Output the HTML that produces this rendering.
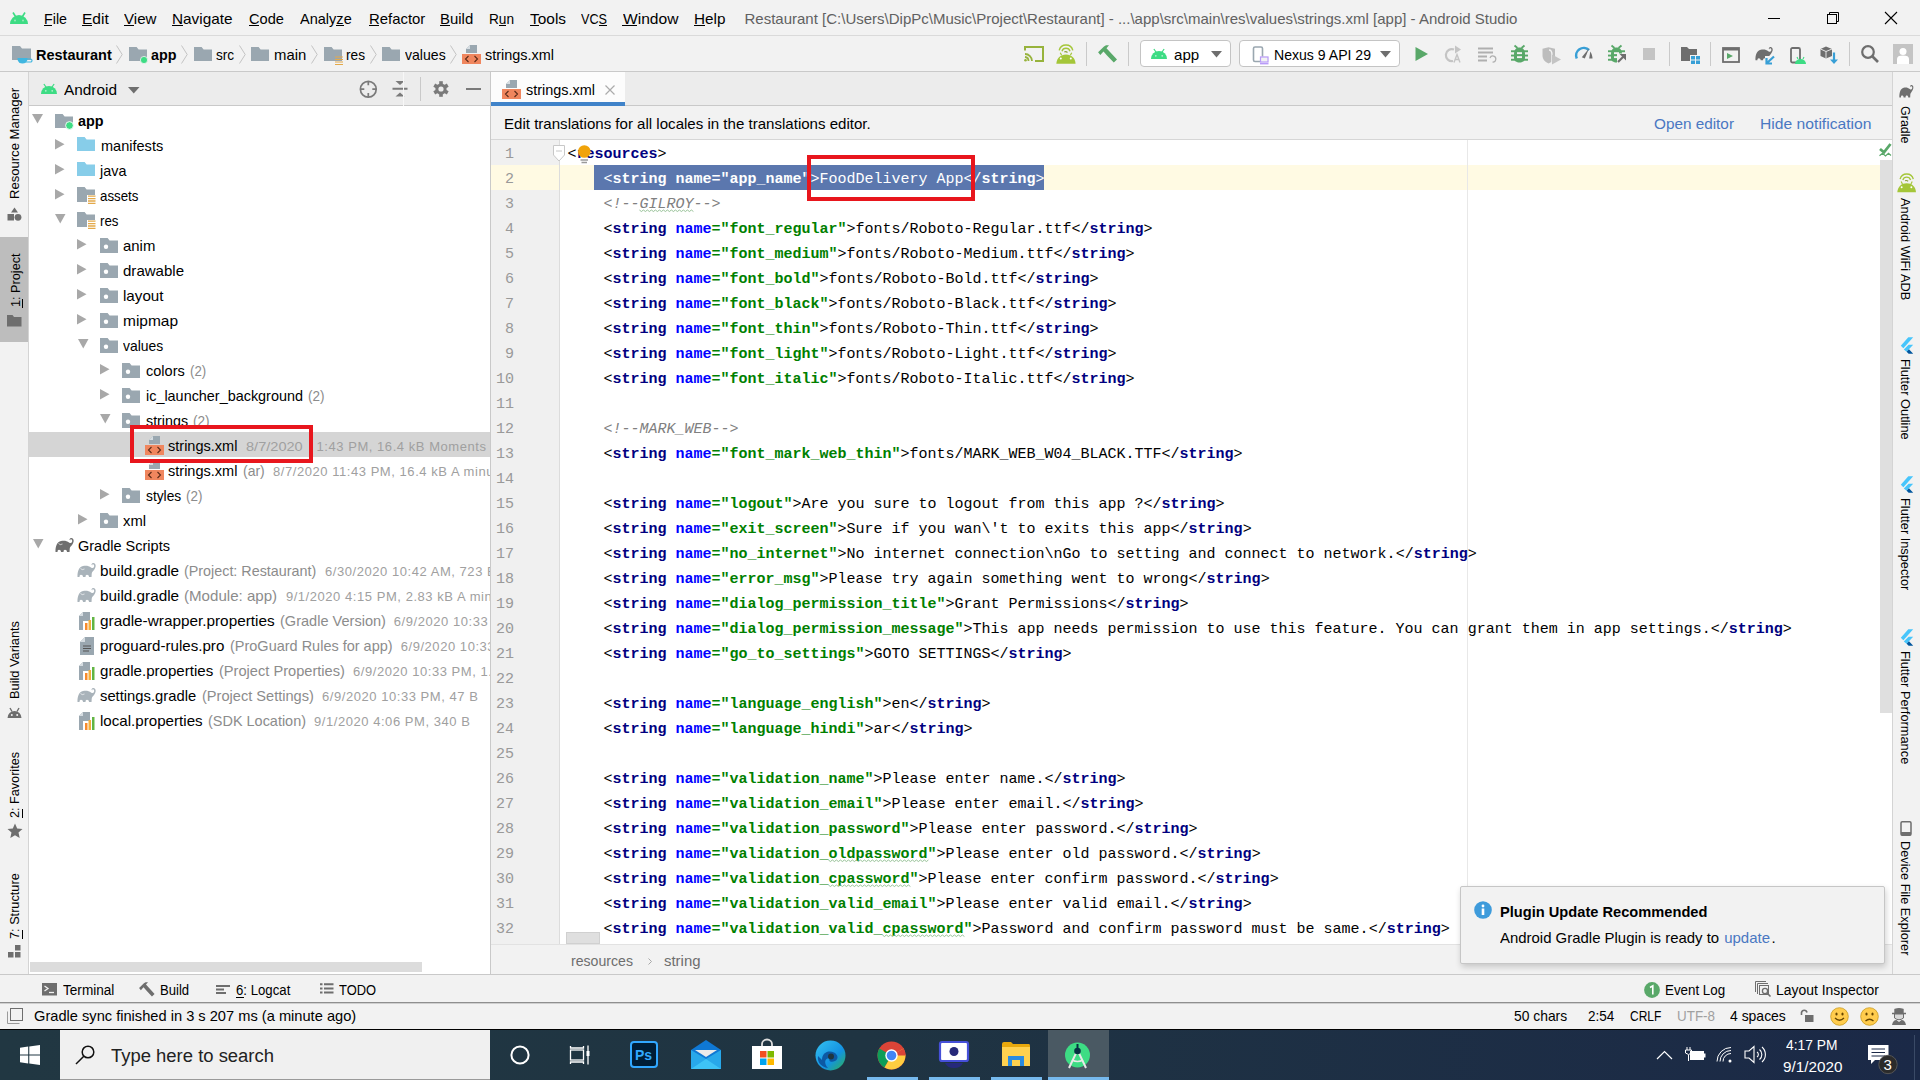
<!DOCTYPE html>
<html><head><meta charset="utf-8"><title>Android Studio</title><style>
html,body{margin:0;padding:0;width:1920px;height:1080px;overflow:hidden;background:#f2f2f2;}
body{position:relative;font-family:'Liberation Sans',sans-serif;}
.t{position:absolute;white-space:pre;line-height:0;transform-origin:0 0;font-family:'Liberation Sans',sans-serif;}
.r{position:absolute;}
.s{position:absolute;overflow:visible;}
</style></head><body>
<div class="r" style="left:0px;top:0px;width:1920px;height:35px;background:#f2f2f2;"></div>
<div class="r" style="left:0px;top:35px;width:1920px;height:1px;background:#dadada;"></div>
<div class="r" style="left:0px;top:36px;width:1920px;height:35px;background:#f2f2f2;"></div>
<div class="r" style="left:0px;top:71px;width:1920px;height:1px;background:#c9c9c9;"></div>
<div class="r" style="left:0px;top:72px;width:28px;height:902px;background:#f2f2f2;"></div>
<div class="r" style="left:28px;top:72px;width:1px;height:902px;background:#d4d4d4;"></div>
<div class="r" style="left:29px;top:72px;width:461px;height:33px;background:#ececec;"></div>
<div class="r" style="left:29px;top:105px;width:461px;height:1px;background:#c9c9c9;"></div>
<div class="r" style="left:29px;top:106px;width:461px;height:868px;background:#ffffff;"></div>
<div class="r" style="left:490px;top:72px;width:1px;height:902px;background:#c9c9c9;"></div>
<div class="r" style="left:491px;top:72px;width:1401px;height:33px;background:#ececec;"></div>
<div class="r" style="left:491px;top:105px;width:1401px;height:1px;background:#c9c9c9;"></div>
<div class="r" style="left:491px;top:106px;width:1401px;height:33px;background:#f2f2f2;"></div>
<div class="r" style="left:491px;top:139px;width:1401px;height:1px;background:#d6d6d6;"></div>
<div class="r" style="left:491px;top:140px;width:1401px;height:805px;background:#ffffff;"></div>
<div class="r" style="left:491px;top:140px;width:68px;height:805px;background:#f0f0f0;"></div>
<div class="r" style="left:559px;top:140px;width:1px;height:805px;background:#dcdcdc;"></div>
<div class="r" style="left:491px;top:945px;width:1401px;height:29px;background:#f2f2f2;"></div>
<div class="r" style="left:491px;top:944px;width:1401px;height:1px;background:#e2e2e2;"></div>
<div class="r" style="left:1892px;top:72px;width:1px;height:902px;background:#d4d4d4;"></div>
<div class="r" style="left:1893px;top:72px;width:27px;height:902px;background:#f2f2f2;"></div>
<div class="r" style="left:0px;top:974px;width:1920px;height:1px;background:#c9c9c9;"></div>
<div class="r" style="left:0px;top:975px;width:1920px;height:27px;background:#f2f2f2;"></div>
<div class="r" style="left:0px;top:1002px;width:1920px;height:1px;background:#8f8f8f;"></div>
<div class="r" style="left:0px;top:1003px;width:1920px;height:1px;background:#cfcfcf;"></div>
<div class="r" style="left:0px;top:1004px;width:1920px;height:25px;background:#f2f2f2;"></div>
<div class="r" style="left:0px;top:1029px;width:1920px;height:1px;background:#000000;"></div>
<div class="r" style="left:0px;top:1030px;width:1920px;height:50px;background:linear-gradient(90deg,#213742 0%,#1f3442 45%,#1b2947 100%);"></div>
<svg class="s" style="left:8px;top:10px;" width="22" height="16" viewBox="0 0 22 16"><path d="M2 14 A9 9 0 0 1 20 14 Z" fill="#3ddc84"/><line x1="5" y1="2.5" x2="7.5" y2="6.5" stroke="#3ddc84" stroke-width="1.6"/><line x1="17" y1="2.5" x2="14.5" y2="6.5" stroke="#3ddc84" stroke-width="1.6"/><circle cx="7" cy="10.5" r="1" fill="#f2f2f2" opacity=".5"/><circle cx="15" cy="10.5" r="1" fill="#f2f2f2" opacity=".5"/></svg>
<div class="t" style="left:43.75px;top:19.00px;font-size:15px;color:#000;transform:scaleX(0.9504);">File</div>
<div class="r" style="left:44px;top:25px;width:8px;height:1px;background:#000;"></div>
<div class="t" style="left:82.00px;top:19.00px;font-size:15px;color:#000;transform:scaleX(1.0368);">Edit</div>
<div class="r" style="left:82px;top:25px;width:10px;height:1px;background:#000;"></div>
<div class="t" style="left:123.75px;top:19.00px;font-size:15px;color:#000;transform:scaleX(1.0062);">View</div>
<div class="r" style="left:124px;top:25px;width:10px;height:1px;background:#000;"></div>
<div class="t" style="left:172.00px;top:19.00px;font-size:15px;color:#000;transform:scaleX(1.0220);">Navigate</div>
<div class="r" style="left:172px;top:25px;width:11px;height:1px;background:#000;"></div>
<div class="t" style="left:248.75px;top:19.00px;font-size:15px;color:#000;transform:scaleX(0.9749);">Code</div>
<div class="r" style="left:249px;top:25px;width:10px;height:1px;background:#000;"></div>
<div class="t" style="left:300.00px;top:19.00px;font-size:15px;color:#000;transform:scaleX(0.9691);">Analyze</div>
<div class="r" style="left:336px;top:25px;width:8px;height:1px;background:#000;"></div>
<div class="t" style="left:368.75px;top:19.00px;font-size:15px;color:#000;transform:scaleX(0.9921);">Refactor</div>
<div class="r" style="left:369px;top:25px;width:10px;height:1px;background:#000;"></div>
<div class="t" style="left:440.00px;top:19.00px;font-size:15px;color:#000;transform:scaleX(0.9955);">Build</div>
<div class="r" style="left:440px;top:25px;width:10px;height:1px;background:#000;"></div>
<div class="t" style="left:489.00px;top:19.00px;font-size:15px;color:#000;transform:scaleX(0.9091);">Run</div>
<div class="r" style="left:499px;top:25px;width:7px;height:1px;background:#000;"></div>
<div class="t" style="left:530.00px;top:19.00px;font-size:15px;color:#000;transform:scaleX(1.0286);">Tools</div>
<div class="r" style="left:530px;top:25px;width:9px;height:1px;background:#000;"></div>
<div class="t" style="left:581.00px;top:19.00px;font-size:15px;color:#000;transform:scaleX(0.8442);">VCS</div>
<div class="r" style="left:599px;top:25px;width:8px;height:1px;background:#000;"></div>
<div class="t" style="left:622.50px;top:19.00px;font-size:15px;color:#000;transform:scaleX(1.0393);">Window</div>
<div class="r" style="left:622px;top:25px;width:15px;height:1px;background:#000;"></div>
<div class="t" style="left:694.00px;top:19.00px;font-size:15px;color:#000;transform:scaleX(1.0194);">Help</div>
<div class="r" style="left:694px;top:25px;width:11px;height:1px;background:#000;"></div>
<div class="t" style="left:744.50px;top:19.00px;font-size:15px;color:#616161;">Restaurant [C:\Users\DipPc\Music\Project\Restaurant] - ...\app\src\main\res\values\strings.xml [app] - Android Studio</div>
<div class="r" style="left:1768px;top:18px;width:12px;height:1px;background:#000;"></div>
<svg class="s" style="left:1826px;top:11px;" width="14" height="14" viewBox="0 0 14 14"><rect x="1.5" y="3.5" width="9" height="9" fill="none" stroke="#000" stroke-width="1"/><path d="M3.5 3.5 V1.5 H12.5 V10.5 H10.5" fill="none" stroke="#000" stroke-width="1"/></svg>
<svg class="s" style="left:1884px;top:11px;" width="14" height="14" viewBox="0 0 14 14"><path d="M1 1 L13 13 M13 1 L1 13" stroke="#000" stroke-width="1.1"/></svg>
<svg class="s" style="left:12px;top:46px;" width="19" height="14" viewBox="0 0 19 14"><path d="M0 0 H8.0 L10.0 2.5 H19 V14 H0 Z" fill="#9aa7b0"/></svg>
<svg class="s" style="left:17px;top:55px;" width="15" height="9" viewBox="0 0 15 9"><path d="M0.5 0 H10.5 V1 A5 4.5 0 0 1 0.5 1 Z" fill="#40b6e0" transform="translate(0,3)"/><path d="M10 4 H13.5 A1.5 1.5 0 0 1 13.5 7 H9" stroke="#40b6e0" stroke-width="1.2" fill="none"/></svg>
<div class="t" style="left:35.70px;top:55.00px;font-size:15px;color:#000;font-weight:700;transform:scaleX(0.9668);">Restaurant</div>
<svg class="s" style="left:116px;top:45px;" width="7" height="19" viewBox="0 0 7 19"><path d="M0.5 0.5 L6.2 9.5 L0.5 18.5" stroke="#c4c4c4" stroke-width="1" fill="none"/></svg>
<svg class="s" style="left:129px;top:47px;" width="18" height="14" viewBox="0 0 18 14"><path d="M0 0 H7.6 L9.6 2.5 H18 V14 H0 Z" fill="#9aa7b0"/></svg>
<svg class="s" style="left:140px;top:56px;" width="8" height="8" viewBox="0 0 8 8"><circle cx="4" cy="4" r="3.6" fill="#3ddc84" stroke="#f2f2f2" stroke-width="0.8"/></svg>
<div class="t" style="left:150.90px;top:55.00px;font-size:15px;color:#000;font-weight:700;transform:scaleX(0.9551);">app</div>
<svg class="s" style="left:181px;top:45px;" width="7" height="19" viewBox="0 0 7 19"><path d="M0.5 0.5 L6.2 9.5 L0.5 18.5" stroke="#c4c4c4" stroke-width="1" fill="none"/></svg>
<svg class="s" style="left:194px;top:47px;" width="18" height="14" viewBox="0 0 18 14"><path d="M0 0 H7.6 L9.6 2.5 H18 V14 H0 Z" fill="#9aa7b0"/></svg>
<div class="t" style="left:215.80px;top:55.00px;font-size:15px;color:#000;transform:scaleX(0.9100);">src</div>
<svg class="s" style="left:239px;top:45px;" width="7" height="19" viewBox="0 0 7 19"><path d="M0.5 0.5 L6.2 9.5 L0.5 18.5" stroke="#c4c4c4" stroke-width="1" fill="none"/></svg>
<svg class="s" style="left:251px;top:47px;" width="18" height="14" viewBox="0 0 18 14"><path d="M0 0 H7.6 L9.6 2.5 H18 V14 H0 Z" fill="#9aa7b0"/></svg>
<div class="t" style="left:273.75px;top:55.00px;font-size:15px;color:#000;transform:scaleX(0.9923);">main</div>
<svg class="s" style="left:311px;top:45px;" width="7" height="19" viewBox="0 0 7 19"><path d="M0.5 0.5 L6.2 9.5 L0.5 18.5" stroke="#c4c4c4" stroke-width="1" fill="none"/></svg>
<svg class="s" style="left:324px;top:47px;" width="18" height="14" viewBox="0 0 18 14"><path d="M0 0 H7.6 L9.6 2.5 H18 V14 H0 Z" fill="#9aa7b0"/></svg>
<svg class="s" style="left:335px;top:56px;" width="9" height="9" viewBox="0 0 9 9"><path d="M0 1 H8 M0 3.5 H8 M0 6 H8 M0 8.5 H8" stroke="#e3a94a" stroke-width="1.2"/></svg>
<div class="t" style="left:346.00px;top:55.00px;font-size:15px;color:#000;transform:scaleX(0.9135);">res</div>
<svg class="s" style="left:370px;top:45px;" width="7" height="19" viewBox="0 0 7 19"><path d="M0.5 0.5 L6.2 9.5 L0.5 18.5" stroke="#c4c4c4" stroke-width="1" fill="none"/></svg>
<svg class="s" style="left:382px;top:47px;" width="18" height="14" viewBox="0 0 18 14"><path d="M0 0 H7.6 L9.6 2.5 H18 V14 H0 Z" fill="#9aa7b0"/></svg>
<div class="t" style="left:405.00px;top:55.00px;font-size:15px;color:#000;transform:scaleX(0.9389);">values</div>
<svg class="s" style="left:450px;top:45px;" width="7" height="19" viewBox="0 0 7 19"><path d="M0.5 0.5 L6.2 9.5 L0.5 18.5" stroke="#c4c4c4" stroke-width="1" fill="none"/></svg>
<svg class="s" style="left:462px;top:45px;" width="19" height="19" viewBox="0 0 19 19"><path d="M8 0 H15 V8 H4 V4 Z" fill="#9aa7b0"/><path d="M4 4 L8 0 V4 Z" fill="#d6dde2"/><rect x="0" y="9" width="19" height="10" fill="#f0865e"/><path d="M6.5 11 L3.5 14 L6.5 17 M12.5 11 L15.5 14 L12.5 17" stroke="#5a2a17" stroke-width="1.1" fill="none"/></svg>
<div class="t" style="left:485.00px;top:55.00px;font-size:15px;color:#000;transform:scaleX(0.9623);">strings.xml</div>
<svg class="s" style="left:1024px;top:46px;" width="20" height="16" viewBox="0 0 20 16"><path d="M1 4.5 V1 H19 V15 H11" stroke="#97b33c" stroke-width="2" fill="none"/><path d="M1 8 A7 7 0 0 1 8 15 M1 11 A4 4 0 0 1 4.5 15" stroke="#97b33c" stroke-width="1.8" fill="none"/><circle cx="1.5" cy="14.2" r="1.3" fill="#97b33c"/></svg>
<svg class="s" style="left:1056px;top:45px;" width="20" height="19" viewBox="0 0 20 19"><path d="M0.3 18.7 C0.8 13 4.5 9.5 10 9.5 C15.5 9.5 19.2 13 19.6 18.7 Z" fill="#a4c639"/><path d="M4.3 7.8 L5.6 10.3 M15.7 7.8 L14.4 10.3" stroke="#a4c639" stroke-width="1.2"/><circle cx="4.8" cy="13.6" r="1" fill="#fff"/><circle cx="14.8" cy="13.6" r="1" fill="#fff"/><path d="M3.2 5.3 A7 7 0 0 1 16.8 5.3" stroke="#a4c639" stroke-width="1.4" fill="none"/><path d="M6 6.2 A4.17 4.17 0 0 1 14 6.2" stroke="#a4c639" stroke-width="1.4" fill="none"/><path d="M8.3 7 Q10 6.2 11.5 7.5" stroke="#8a9e3a" stroke-width="1.2" fill="none"/></svg>
<div class="r" style="left:1086px;top:42px;width:1px;height:24px;background:#cacaca;"></div>
<svg class="s" style="left:1098px;top:45px;" width="20" height="18" viewBox="0 0 20 18"><path d="M0.1 7.2 L6 1.5 L8 0.3 H11 L8.5 3.2 L19 14.6 L15.8 17.6 L9 10.5 L5.5 6.5 L2.3 10 Z" fill="#59a869"/></svg>
<div class="r" style="left:1128px;top:42px;width:1px;height:24px;background:#cacaca;"></div>
<div class="r" style="left:1140px;top:40px;width:91px;height:27px;background:#ffffff;border:1px solid #c4c4c4;border-radius:4px;box-sizing:border-box;"></div>
<svg class="s" style="left:1151px;top:49px;" width="16" height="10" viewBox="0 0 16 10"><path d="M0 10 A8.0 8.0 0 0 1 16 10 Z" fill="#3ddc84"/><line x1="2.88" y1="0" x2="5.28" y2="3.5" stroke="#3ddc84" stroke-width="1.3"/><line x1="13.12" y1="0" x2="10.72" y2="3.5" stroke="#3ddc84" stroke-width="1.3"/><circle cx="4.8" cy="6.800000000000001" r="0.88" fill="#ffffff" opacity=".6"/><circle cx="11.2" cy="6.800000000000001" r="0.88" fill="#ffffff" opacity=".6"/></svg>
<div class="t" style="left:1174.30px;top:55.00px;font-size:15px;color:#000;transform:scaleX(1.0080);">app</div>
<svg class="s" style="left:1211px;top:51px;" width="11" height="7" viewBox="0 0 11 7"><path d="M0 0 H11 L5.5 6.5 Z" fill="#6e6e6e"/></svg>
<div class="r" style="left:1239px;top:40px;width:161px;height:27px;background:#ffffff;border:1px solid #c4c4c4;border-radius:4px;box-sizing:border-box;"></div>
<svg class="s" style="left:1252px;top:46px;" width="17" height="19" viewBox="0 0 17 19"><rect x="1.5" y="1" width="9" height="14.5" rx="1.5" fill="none" stroke="#9aa7b0" stroke-width="1.6"/><rect x="8" y="10.5" width="8.5" height="6" fill="#f2f2f2"/><rect x="8.5" y="11" width="7.5" height="5" fill="none" stroke="#b99bf8" stroke-width="1.2"/><rect x="8" y="17" width="8.5" height="1.4" fill="#b99bf8"/></svg>
<div class="t" style="left:1273.70px;top:55.00px;font-size:15px;color:#000;transform:scaleX(0.9381);">Nexus 9 API 29</div>
<svg class="s" style="left:1380px;top:51px;" width="11" height="7" viewBox="0 0 11 7"><path d="M0 0 H11 L5.5 6.5 Z" fill="#6e6e6e"/></svg>
<svg class="s" style="left:1415px;top:47px;" width="13" height="14" viewBox="0 0 13 14"><path d="M0.5 0 L13 7 L0.5 14 Z" fill="#59a869"/></svg>
<svg class="s" style="left:1445px;top:45px;" width="17" height="18" viewBox="0 0 17 18"><path d="M9 4.5 A6 6 0 1 0 8 16" stroke="#c4c4c4" stroke-width="2.2" fill="none"/><path d="M10 0.5 L16 4.5 L10 8.5 Z" fill="#c4c4c4"/><path d="M9 17.5 L12 9.5 L15 17.5 M10.2 14.5 H13.8" stroke="#c4c4c4" stroke-width="1.4" fill="none"/></svg>
<svg class="s" style="left:1478px;top:47px;" width="18" height="16" viewBox="0 0 18 16"><path d="M0 1.5 H15 M0 5.5 H15 M0 9.5 H9 M0 13.5 H9" stroke="#afafaf" stroke-width="2"/><path d="M12 11 A3 3 0 1 1 14.5 15" stroke="#afafaf" stroke-width="1.2" fill="none"/></svg>
<svg class="s" style="left:1511px;top:45.3px;" width="17" height="18" viewBox="0 0 17 18"><path d="M3.5 0.5 L6.5 3 M13.5 0.5 L10.5 3" stroke="#59a869" stroke-width="1.8"/><rect x="0" y="5.3" width="17" height="1.9" fill="#59a869"/><rect x="0" y="9.6" width="17" height="1.9" fill="#59a869"/><rect x="0" y="13.8" width="17" height="1.9" fill="#59a869"/><path d="M3 9 C3 4.5 5.5 2.5 8.5 2.5 C11.5 2.5 14 4.5 14 9 V13 C14 16 11.5 17.5 8.5 17.5 C5.5 17.5 3 16 3 13 Z" fill="#59a869"/><rect x="6" y="7.2" width="5" height="1.9" fill="#f2f2f2"/><rect x="6" y="11.2" width="5" height="1.9" fill="#f2f2f2"/></svg>
<svg class="s" style="left:1542px;top:46.5px;" width="19" height="18" viewBox="0 0 19 18"><path d="M0.5 1.8 L6.5 0.3 L13 1.8 V9 Q13 13.5 6.5 16.5 Q0.5 13.5 0.5 9 Z" fill="#bdbdbd"/><path d="M7 3 Q10 3 10 8 V15" stroke="#f2f2f2" stroke-width="1.4" fill="none"/><path d="M10 7.5 L19 12.5 L10 17.5 Z" fill="#c4c4c4"/></svg>
<svg class="s" style="left:1575px;top:47px;" width="18" height="12" viewBox="0 0 18 12"><path d="M1.8 11.5 A7.5 7.5 0 0 1 14 3.2" stroke="#389fd6" stroke-width="2.6" fill="none"/><path d="M14.3 1 L9.8 11.5 L6.8 10.2 Z" fill="#6e6e6e"/><path d="M15.3 4.5 C16.5 6.5 17.5 9 17.5 11.5 H14.2 Z" fill="#6e6e6e"/></svg>
<svg class="s" style="left:1608px;top:45.3px;" width="17" height="18" viewBox="0 0 17 18"><path d="M3.5 0.5 L6.5 3 M13.5 0.5 L10.5 3" stroke="#59a869" stroke-width="1.8"/><rect x="0" y="5.3" width="17" height="1.9" fill="#59a869"/><rect x="0" y="9.6" width="17" height="1.9" fill="#59a869"/><rect x="0" y="13.8" width="17" height="1.9" fill="#59a869"/><path d="M3 9 C3 4.5 5.5 2.5 8.5 2.5 C11.5 2.5 14 4.5 14 9 V13 C14 16 11.5 17.5 8.5 17.5 C5.5 17.5 3 16 3 13 Z" fill="#59a869"/><rect x="6" y="7.2" width="5" height="1.9" fill="#f2f2f2"/><rect x="6" y="11.2" width="5" height="1.9" fill="#f2f2f2"/><rect x="9" y="8.5" width="10" height="10" fill="#f2f2f2"/><path d="M10 17 L16.5 10.5" stroke="#6e6e6e" stroke-width="2.2"/><path d="M11.5 9 H18 V15.5 Z" fill="#6e6e6e"/></svg>
<div class="r" style="left:1643px;top:48px;width:12px;height:12px;background:#c4c4c4;"></div>
<div class="r" style="left:1669px;top:42px;width:1px;height:24px;background:#cacaca;"></div>
<svg class="s" style="left:1681px;top:47px;" width="20" height="17" viewBox="0 0 20 17"><path d="M0 0 H6 L8 2 H16 V8 H9 V14 H0 Z" fill="#6e6e6e"/><rect x="10" y="9" width="4" height="3.5" fill="#389fd6"/><rect x="15" y="9" width="4" height="3.5" fill="#389fd6"/><rect x="10" y="13.5" width="4" height="3.5" fill="#389fd6"/><rect x="15" y="13.5" width="4" height="3.5" fill="#389fd6"/></svg>
<div class="r" style="left:1710px;top:42px;width:1px;height:24px;background:#cacaca;"></div>
<svg class="s" style="left:1722px;top:46.5px;" width="18" height="16" viewBox="0 0 18 16"><rect x="1" y="1" width="16" height="14" fill="none" stroke="#6e6e6e" stroke-width="1.8"/><rect x="1" y="1" width="16" height="2.5" fill="#6e6e6e"/><path d="M5 6 L11 9 L5 12 Z" fill="#59a869"/></svg>
<svg class="s" style="left:1754.5px;top:46.5px;" width="20" height="18" viewBox="0 0 20 18"><g transform="scale(0.95,0.95)"><path d="M0.5 14 C0.3 8 2 4 6 3 C9 2.2 12 2.8 14 4.5 C15.5 5.5 16.5 5 17 4 C17.6 2.8 17 1.3 16 1.3 C15.3 1.3 15 2 15.3 2.5 L14.5 1.8 C14.5 0.5 15.5 0 16.5 0 C18.5 0.2 19 2.5 18.5 4 C17.8 6.5 16 8 15 9.5 C14.5 10.5 14.8 12.5 14.5 14 H12 C12 12.5 11 11.8 10 11.8 C9 11.8 8.5 12.5 8.5 14 H6 C6 12.5 5 11.8 4 11.8 C3 11.8 2.5 12.5 2.5 14 Z" fill="#6e6e6e"/></g><rect x="10" y="9" width="10" height="9" fill="#f2f2f2"/><path d="M19 9.5 L12.5 15.5 M11.5 11 V16.5 H17" stroke="#389fd6" stroke-width="2.2" fill="none"/></svg>
<svg class="s" style="left:1790px;top:46.5px;" width="16" height="17" viewBox="0 0 16 17"><rect x="1" y="1" width="9" height="14.5" rx="1.5" fill="none" stroke="#6e6e6e" stroke-width="1.8"/><path d="M5 17 A5.5 5 0 0 1 16 17 Z" fill="#3ddc84"/><path d="M7 10 L8 12 M14 10 L13 12" stroke="#3ddc84" stroke-width="1.1"/></svg>
<svg class="s" style="left:1820px;top:45.5px;" width="20" height="19" viewBox="0 0 20 19"><path d="M6 0.5 L12 3 L12 10 L6 12.5 L0.5 10 V3 Z" fill="#6e6e6e"/><path d="M0.5 3 L6 5.5 L12 3 M6 5.5 V12.5" stroke="#f2f2f2" stroke-width="0.9" fill="none"/><path d="M14 6.5 V16" stroke="#389fd6" stroke-width="2.2"/><path d="M10 13.5 L14 18 L18 13.5 Z" fill="#389fd6"/></svg>
<div class="r" style="left:1849px;top:42px;width:1px;height:24px;background:#cacaca;"></div>
<svg class="s" style="left:1861px;top:45px;" width="18" height="18" viewBox="0 0 18 18"><circle cx="7" cy="7" r="5.8" fill="none" stroke="#6e6e6e" stroke-width="2.2"/><path d="M11 11 L17 17" stroke="#6e6e6e" stroke-width="2.6"/></svg>
<svg class="s" style="left:1893px;top:44px;" width="20" height="20" viewBox="0 0 20 20"><rect width="20" height="20" fill="#c4c4c4"/><circle cx="10" cy="7.5" r="3.5" fill="#fff"/><path d="M4 20 V15 C4 12.5 6 11.5 10 11.5 C14 11.5 16 12.5 16 15 V20 Z" fill="#fff"/></svg>
<div class="t" style="left:14.99px;top:199.40px;font-size:13px;color:#000;transform:rotate(-90deg) scaleX(1.0045);">Resource Manager</div>
<svg class="s" style="left:7px;top:206.5px;" width="15" height="14" viewBox="0 0 15 14"><path d="M7.5 0.5 L11 5.5 H4 Z" fill="#6e6e6e"/><rect x="0.5" y="7" width="6.5" height="6.5" fill="#6e6e6e"/><circle cx="11" cy="10.3" r="3.4" fill="#6e6e6e"/></svg>
<div class="r" style="left:0px;top:237px;width:28px;height:105px;background:#bdbdbd;"></div>
<div class="t" style="left:15.99px;top:307.30px;font-size:13px;color:#000;transform:rotate(-90deg) scaleX(0.9763);">1: Project</div>
<div class="r" style="left:22px;top:299px;width:1px;height:8.5px;background:#000;"></div>
<svg class="s" style="left:7px;top:315px;" width="15" height="12" viewBox="0 0 15 12"><path d="M0 0 H5.5 L7 2 H14.5 V11.5 H0 Z" fill="#6e6e6e"/></svg>
<div class="t" style="left:14.99px;top:698.50px;font-size:13px;color:#000;transform:rotate(-90deg) scaleX(0.9836);">Build Variants</div>
<svg class="s" style="left:7px;top:705.5px;" width="15" height="12" viewBox="0 0 15 12"><path d="M0.5 12 A7 7 0 0 1 14.5 12 Z" fill="#6e6e6e"/><path d="M3 2 L5 5.5 M12 2 L10 5.5" stroke="#6e6e6e" stroke-width="1.4"/><circle cx="4.8" cy="9" r="1" fill="#f2f2f2"/><circle cx="10.2" cy="9" r="1" fill="#f2f2f2"/></svg>
<div class="t" style="left:14.99px;top:818.00px;font-size:13px;color:#000;transform:rotate(-90deg) scaleX(0.9720);">2: Favorites</div>
<div class="r" style="left:22px;top:809px;width:1px;height:9px;background:#000;"></div>
<svg class="s" style="left:6.5px;top:822.5px;" width="16" height="16" viewBox="0 0 16 16"><path d="M8 0.5 L10.2 5.6 L15.5 6.1 L11.5 9.6 L12.7 15 L8 12.2 L3.3 15 L4.5 9.6 L0.5 6.1 L5.8 5.6 Z" fill="#6e6e6e"/></svg>
<div class="t" style="left:14.99px;top:938.70px;font-size:13px;color:#000;transform:rotate(-90deg) scaleX(0.9777);">7: Structure</div>
<div class="r" style="left:22px;top:930px;width:1px;height:9px;background:#000;"></div>
<svg class="s" style="left:8px;top:945px;" width="14" height="13" viewBox="0 0 14 13"><rect x="7" y="0" width="5.5" height="5.5" fill="#6e6e6e"/><rect x="0" y="7" width="5.5" height="5.5" fill="#6e6e6e"/><rect x="7" y="7" width="5.5" height="5.5" fill="#6e6e6e"/></svg>
<div style="position:absolute;left:0;top:0;width:490px;height:974px;overflow:hidden"><svg class="s" style="left:41px;top:84px;" width="16" height="10" viewBox="0 0 16 10"><path d="M0 10 A8.0 8.0 0 0 1 16 10 Z" fill="#3ddc84"/><line x1="2.88" y1="0" x2="5.28" y2="3.5" stroke="#3ddc84" stroke-width="1.3"/><line x1="13.12" y1="0" x2="10.72" y2="3.5" stroke="#3ddc84" stroke-width="1.3"/><circle cx="4.8" cy="6.800000000000001" r="0.88" fill="#ffffff" opacity=".6"/><circle cx="11.2" cy="6.800000000000001" r="0.88" fill="#ffffff" opacity=".6"/></svg>
<div class="t" style="left:64.25px;top:90.00px;font-size:15px;color:#000;transform:scaleX(1.0242);">Android</div>
<svg class="s" style="left:128px;top:87px;" width="12" height="7" viewBox="0 0 12 7"><path d="M0 0 H11.5 L5.75 6.5 Z" fill="#6e6e6e"/></svg>
<svg class="s" style="left:359px;top:80px;" width="19" height="19" viewBox="0 0 19 19"><circle cx="9.3" cy="9.2" r="7.9" fill="none" stroke="#7a7a7a" stroke-width="1.7"/><path d="M9.3 1 V5.3 M9.3 13 V17.4 M1 9.2 H5.3 M13.3 9.2 H17.6" stroke="#7a7a7a" stroke-width="1.7"/></svg>
<svg class="s" style="left:392px;top:81px;" width="16" height="16" viewBox="0 0 16 16"><path d="M3.5 0 H12.5 L8 4 Z M0.5 6.8 H15.5 V8.8 H0.5 Z M3.5 15.5 H12.5 L8 11.5 Z" fill="#7a7a7a"/></svg>
<div class="r" style="left:420px;top:77px;width:1px;height:24px;background:#c9c9c9;"></div>
<div class="r" style="left:403px;top:72px;width:1px;height:34px;background:#f7f7f7;"></div>
<svg class="s" style="left:433px;top:81px;" width="16" height="16" viewBox="0 0 16 16"><g transform="translate(8,8)"><circle r="5.6" fill="#7a7a7a"/><rect x="-1.8" y="-7.8" width="3.6" height="4" fill="#7a7a7a" transform="rotate(0)"/><rect x="-1.8" y="-7.8" width="3.6" height="4" fill="#7a7a7a" transform="rotate(60)"/><rect x="-1.8" y="-7.8" width="3.6" height="4" fill="#7a7a7a" transform="rotate(120)"/><rect x="-1.8" y="-7.8" width="3.6" height="4" fill="#7a7a7a" transform="rotate(180)"/><rect x="-1.8" y="-7.8" width="3.6" height="4" fill="#7a7a7a" transform="rotate(240)"/><rect x="-1.8" y="-7.8" width="3.6" height="4" fill="#7a7a7a" transform="rotate(300)"/><circle r="2.6" fill="#ececec"/></g></svg>
<div class="r" style="left:466px;top:88px;width:15px;height:2px;background:#7a7a7a;"></div>
<svg class="s" style="left:32px;top:114px;" width="11" height="9.5" viewBox="0 0 11 9.5"><path d="M0 0 H11 L5.5 9.5 Z" fill="#a8a8a8"/></svg>
<svg class="s" style="left:55px;top:114px;" width="18" height="14" viewBox="0 0 18 14"><path d="M0 0 H7.6 L9.6 2.5 H18 V14 H0 Z" fill="#9aa7b0"/></svg>
<svg class="s" style="left:65px;top:121px;" width="9" height="9" viewBox="0 0 9 9"><circle cx="4.5" cy="4.5" r="3.9" fill="#3ddc84" stroke="#ffffff" stroke-width="0.9"/></svg>
<div class="t" style="left:78.40px;top:121.00px;font-size:15px;color:#000;font-weight:700;transform:scaleX(0.9588);">app</div>
<svg class="s" style="left:55px;top:138.5px;" width="9.5" height="10.5" viewBox="0 0 9.5 10.5"><path d="M0 0 L9.5 5.25 L0 10.5 Z" fill="#a8a8a8"/></svg>
<svg class="s" style="left:77px;top:137px;" width="18" height="14" viewBox="0 0 18 14"><path d="M0 0 H7.6 L9.6 2.5 H18 V14 H0 Z" fill="#87cde9"/></svg>
<div class="t" style="left:100.60px;top:146.00px;font-size:15px;color:#000;transform:scaleX(0.9688);">manifests</div>
<svg class="s" style="left:55px;top:163.5px;" width="9.5" height="10.5" viewBox="0 0 9.5 10.5"><path d="M0 0 L9.5 5.25 L0 10.5 Z" fill="#a8a8a8"/></svg>
<svg class="s" style="left:77px;top:162px;" width="18" height="14" viewBox="0 0 18 14"><path d="M0 0 H7.6 L9.6 2.5 H18 V14 H0 Z" fill="#87cde9"/></svg>
<div class="t" style="left:99.78px;top:171.00px;font-size:15px;color:#000;transform:scaleX(0.9589);">java</div>
<svg class="s" style="left:55px;top:188.5px;" width="9.5" height="10.5" viewBox="0 0 9.5 10.5"><path d="M0 0 L9.5 5.25 L0 10.5 Z" fill="#a8a8a8"/></svg>
<svg class="s" style="left:77px;top:187px;" width="18" height="15" viewBox="0 0 18 15"><path d="M0 0 H7.6 L9.6 2.5 H18 V15 H0 Z" fill="#9aa7b0"/></svg><svg class="s" style="left:87px;top:195px;" width="9" height="9" viewBox="0 0 9 9"><rect x="0" y="0" width="9" height="9" fill="#ffffff"/><path d="M1 1.2 H8.5 M1 3.6 H8.5 M1 6 H8.5 M1 8.4 H8.5" stroke="#e3a94a" stroke-width="1.3"/></svg>
<div class="t" style="left:100.40px;top:196.00px;font-size:15px;color:#000;transform:scaleX(0.8871);">assets</div>
<svg class="s" style="left:55px;top:214px;" width="10.5" height="9.5" viewBox="0 0 10.5 9.5"><path d="M0 0 H10.5 L5.25 9.5 Z" fill="#a8a8a8"/></svg>
<svg class="s" style="left:77px;top:212px;" width="18" height="15" viewBox="0 0 18 15"><path d="M0 0 H7.6 L9.6 2.5 H18 V15 H0 Z" fill="#9aa7b0"/></svg><svg class="s" style="left:87px;top:220px;" width="9" height="9" viewBox="0 0 9 9"><rect x="0" y="0" width="9" height="9" fill="#ffffff"/><path d="M1 1.2 H8.5 M1 3.6 H8.5 M1 6 H8.5 M1 8.4 H8.5" stroke="#e3a94a" stroke-width="1.3"/></svg>
<div class="t" style="left:100.40px;top:221.00px;font-size:15px;color:#000;transform:scaleX(0.8894);">res</div>
<svg class="s" style="left:77px;top:238.5px;" width="9.5" height="10.5" viewBox="0 0 9.5 10.5"><path d="M0 0 L9.5 5.25 L0 10.5 Z" fill="#a8a8a8"/></svg>
<svg class="s" style="left:100px;top:238px;" width="18" height="15" viewBox="0 0 18 15"><path d="M0 0 H7.6 L9.6 2.5 H18 V15 H0 Z" fill="#9aa7b0"/></svg><svg class="s" style="left:100px;top:238px;" width="18" height="15" viewBox="0 0 18 15"><circle cx="6" cy="8.8" r="2.2" fill="#ffffff"/></svg>
<div class="t" style="left:123.30px;top:246.00px;font-size:15px;color:#000;transform:scaleX(0.9938);">anim</div>
<svg class="s" style="left:77px;top:263.5px;" width="9.5" height="10.5" viewBox="0 0 9.5 10.5"><path d="M0 0 L9.5 5.25 L0 10.5 Z" fill="#a8a8a8"/></svg>
<svg class="s" style="left:100px;top:263px;" width="18" height="15" viewBox="0 0 18 15"><path d="M0 0 H7.6 L9.6 2.5 H18 V15 H0 Z" fill="#9aa7b0"/></svg><svg class="s" style="left:100px;top:263px;" width="18" height="15" viewBox="0 0 18 15"><circle cx="6" cy="8.8" r="2.2" fill="#ffffff"/></svg>
<div class="t" style="left:123.30px;top:271.00px;font-size:15px;color:#000;transform:scaleX(1.0033);">drawable</div>
<svg class="s" style="left:77px;top:288.5px;" width="9.5" height="10.5" viewBox="0 0 9.5 10.5"><path d="M0 0 L9.5 5.25 L0 10.5 Z" fill="#a8a8a8"/></svg>
<svg class="s" style="left:100px;top:288px;" width="18" height="15" viewBox="0 0 18 15"><path d="M0 0 H7.6 L9.6 2.5 H18 V15 H0 Z" fill="#9aa7b0"/></svg><svg class="s" style="left:100px;top:288px;" width="18" height="15" viewBox="0 0 18 15"><circle cx="6" cy="8.8" r="2.2" fill="#ffffff"/></svg>
<div class="t" style="left:123.30px;top:296.00px;font-size:15px;color:#000;transform:scaleX(1.0125);">layout</div>
<svg class="s" style="left:77px;top:313.5px;" width="9.5" height="10.5" viewBox="0 0 9.5 10.5"><path d="M0 0 L9.5 5.25 L0 10.5 Z" fill="#a8a8a8"/></svg>
<svg class="s" style="left:100px;top:313px;" width="18" height="15" viewBox="0 0 18 15"><path d="M0 0 H7.6 L9.6 2.5 H18 V15 H0 Z" fill="#9aa7b0"/></svg><svg class="s" style="left:100px;top:313px;" width="18" height="15" viewBox="0 0 18 15"><circle cx="6" cy="8.8" r="2.2" fill="#ffffff"/></svg>
<div class="t" style="left:123.30px;top:321.00px;font-size:15px;color:#000;transform:scaleX(1.0318);">mipmap</div>
<svg class="s" style="left:77.5px;top:339px;" width="10.5" height="9.5" viewBox="0 0 10.5 9.5"><path d="M0 0 H10.5 L5.25 9.5 Z" fill="#a8a8a8"/></svg>
<svg class="s" style="left:99.5px;top:338px;" width="18" height="15" viewBox="0 0 18 15"><path d="M0 0 H7.6 L9.6 2.5 H18 V15 H0 Z" fill="#9aa7b0"/></svg><svg class="s" style="left:99.5px;top:338px;" width="18" height="15" viewBox="0 0 18 15"><circle cx="6" cy="8.8" r="2.2" fill="#ffffff"/></svg>
<div class="t" style="left:123.00px;top:346.00px;font-size:15px;color:#000;transform:scaleX(0.9286);">values</div>
<svg class="s" style="left:100px;top:363.5px;" width="9.5" height="10.5" viewBox="0 0 9.5 10.5"><path d="M0 0 L9.5 5.25 L0 10.5 Z" fill="#a8a8a8"/></svg>
<svg class="s" style="left:122px;top:363px;" width="18" height="15" viewBox="0 0 18 15"><path d="M0 0 H7.6 L9.6 2.5 H18 V15 H0 Z" fill="#9aa7b0"/></svg><svg class="s" style="left:122px;top:363px;" width="18" height="15" viewBox="0 0 18 15"><circle cx="6" cy="8.8" r="2.2" fill="#ffffff"/></svg>
<div class="t" style="left:145.50px;top:371.00px;font-size:15px;color:#000;transform:scaleX(0.9700);">colors</div>
<div class="t" style="left:190.00px;top:371.00px;font-size:15px;color:#8c8c8c;transform:scaleX(0.8852);">(2)</div>
<svg class="s" style="left:100px;top:388.5px;" width="9.5" height="10.5" viewBox="0 0 9.5 10.5"><path d="M0 0 L9.5 5.25 L0 10.5 Z" fill="#a8a8a8"/></svg>
<svg class="s" style="left:122px;top:388px;" width="18" height="15" viewBox="0 0 18 15"><path d="M0 0 H7.6 L9.6 2.5 H18 V15 H0 Z" fill="#9aa7b0"/></svg><svg class="s" style="left:122px;top:388px;" width="18" height="15" viewBox="0 0 18 15"><circle cx="6" cy="8.8" r="2.2" fill="#ffffff"/></svg>
<div class="t" style="left:145.50px;top:396.00px;font-size:15px;color:#000;transform:scaleX(0.9602);">ic_launcher_background</div>
<div class="t" style="left:307.50px;top:396.00px;font-size:15px;color:#8c8c8c;transform:scaleX(0.9016);">(2)</div>
<svg class="s" style="left:100px;top:414px;" width="10.5" height="9.5" viewBox="0 0 10.5 9.5"><path d="M0 0 H10.5 L5.25 9.5 Z" fill="#a8a8a8"/></svg>
<svg class="s" style="left:122px;top:413px;" width="18" height="15" viewBox="0 0 18 15"><path d="M0 0 H7.6 L9.6 2.5 H18 V15 H0 Z" fill="#9aa7b0"/></svg><svg class="s" style="left:122px;top:413px;" width="18" height="15" viewBox="0 0 18 15"><circle cx="6" cy="8.8" r="2.2" fill="#ffffff"/></svg>
<div class="t" style="left:145.50px;top:421.00px;font-size:15px;color:#000;transform:scaleX(0.9525);">strings</div>
<div class="t" style="left:192.70px;top:421.00px;font-size:15px;color:#8c8c8c;transform:scaleX(0.9071);">(2)</div>
<div class="r" style="left:29px;top:432px;width:461px;height:25px;background:#d5d5d5;"></div>
<svg class="s" style="left:145px;top:436px;" width="19" height="19" viewBox="0 0 19 19"><path d="M8 0 H15 V8 H4 V4 Z" fill="#9aa7b0"/><path d="M4 4 L8 0 V4 Z" fill="#d6dde2"/><rect x="0" y="9" width="19" height="10" fill="#f0865e"/><path d="M6.5 11 L3.5 14 L6.5 17 M12.5 11 L15.5 14 L12.5 17" stroke="#5a2a17" stroke-width="1.1" fill="none"/></svg>
<div class="t" style="left:168.00px;top:446.00px;font-size:15px;color:#000;transform:scaleX(0.9679);">strings.xml</div>
<div class="t" style="left:246.30px;top:447.00px;font-size:13px;color:#a0a0a0;transform:scaleX(1.1206);">8/7/2020</div>
<div class="t" style="left:316.50px;top:447.00px;font-size:13px;color:#a0a0a0;letter-spacing:0.55px;">1:43 PM, 16.4 kB Moments ago</div>
<svg class="s" style="left:145px;top:461px;" width="19" height="19" viewBox="0 0 19 19"><path d="M8 0 H15 V8 H4 V4 Z" fill="#9aa7b0"/><path d="M4 4 L8 0 V4 Z" fill="#d6dde2"/><rect x="0" y="9" width="19" height="10" fill="#f0865e"/><path d="M6.5 11 L3.5 14 L6.5 17 M12.5 11 L15.5 14 L12.5 17" stroke="#5a2a17" stroke-width="1.1" fill="none"/></svg>
<div class="t" style="left:168.00px;top:471.00px;font-size:15px;color:#000;transform:scaleX(0.9679);">strings.xml</div>
<div class="t" style="left:242.50px;top:471.00px;font-size:15px;color:#8c8c8c;transform:scaleX(0.9313);">(ar)</div>
<div class="t" style="left:273.00px;top:472.00px;font-size:13px;color:#a0a0a0;letter-spacing:0.55px;">8/7/2020 11:43 PM, 16.4 kB A minute ago</div>
<svg class="s" style="left:100px;top:488.5px;" width="9.5" height="10.5" viewBox="0 0 9.5 10.5"><path d="M0 0 L9.5 5.25 L0 10.5 Z" fill="#a8a8a8"/></svg>
<svg class="s" style="left:122px;top:488px;" width="18" height="15" viewBox="0 0 18 15"><path d="M0 0 H7.6 L9.6 2.5 H18 V15 H0 Z" fill="#9aa7b0"/></svg><svg class="s" style="left:122px;top:488px;" width="18" height="15" viewBox="0 0 18 15"><circle cx="6" cy="8.8" r="2.2" fill="#ffffff"/></svg>
<div class="t" style="left:145.50px;top:496.00px;font-size:15px;color:#000;transform:scaleX(0.9191);">styles</div>
<div class="t" style="left:185.60px;top:496.00px;font-size:15px;color:#8c8c8c;transform:scaleX(0.8962);">(2)</div>
<svg class="s" style="left:77.5px;top:513.5px;" width="9.5" height="10.5" viewBox="0 0 9.5 10.5"><path d="M0 0 L9.5 5.25 L0 10.5 Z" fill="#a8a8a8"/></svg>
<svg class="s" style="left:99.5px;top:513px;" width="18" height="15" viewBox="0 0 18 15"><path d="M0 0 H7.6 L9.6 2.5 H18 V15 H0 Z" fill="#9aa7b0"/></svg><svg class="s" style="left:99.5px;top:513px;" width="18" height="15" viewBox="0 0 18 15"><circle cx="6" cy="8.8" r="2.2" fill="#ffffff"/></svg>
<div class="t" style="left:123.00px;top:521.00px;font-size:15px;color:#000;transform:scaleX(0.9871);">xml</div>
<svg class="s" style="left:33px;top:539px;" width="10.5" height="9.5" viewBox="0 0 10.5 9.5"><path d="M0 0 H10.5 L5.25 9.5 Z" fill="#a8a8a8"/></svg>
<svg class="s" style="left:54.6px;top:538px;" width="19" height="15" viewBox="0 0 19 15"><path d="M0.5 14 C0.3 8 2 4 6 3 C9 2.2 12 2.8 14 4.5 C15.5 5.5 16.5 5 17 4 C17.6 2.8 17 1.3 16 1.3 C15.3 1.3 15 2 15.3 2.5 L14.5 1.8 C14.5 0.5 15.5 0 16.5 0 C18.5 0.2 19 2.5 18.5 4 C17.8 6.5 16 8 15 9.5 C14.5 10.5 14.8 12.5 14.5 14 H12 C12 12.5 11 11.8 10 11.8 C9 11.8 8.5 12.5 8.5 14 H6 C6 12.5 5 11.8 4 11.8 C3 11.8 2.5 12.5 2.5 14 Z" fill="#6e6e6e"/><path d="M3.5 5.5 Q5 7.5 7.5 6" stroke="#ffffff" stroke-width="0.8" fill="none" opacity=".8"/></svg>
<div class="t" style="left:77.80px;top:546.00px;font-size:15px;color:#000;transform:scaleX(0.9674);">Gradle Scripts</div>
<svg class="s" style="left:76.8px;top:563px;" width="19" height="15" viewBox="0 0 19 15"><path d="M0.5 14 C0.3 8 2 4 6 3 C9 2.2 12 2.8 14 4.5 C15.5 5.5 16.5 5 17 4 C17.6 2.8 17 1.3 16 1.3 C15.3 1.3 15 2 15.3 2.5 L14.5 1.8 C14.5 0.5 15.5 0 16.5 0 C18.5 0.2 19 2.5 18.5 4 C17.8 6.5 16 8 15 9.5 C14.5 10.5 14.8 12.5 14.5 14 H12 C12 12.5 11 11.8 10 11.8 C9 11.8 8.5 12.5 8.5 14 H6 C6 12.5 5 11.8 4 11.8 C3 11.8 2.5 12.5 2.5 14 Z" fill="#a9b3ba"/><path d="M3.5 5.5 Q5 7.5 7.5 6" stroke="#ffffff" stroke-width="0.8" fill="none" opacity=".8"/></svg>
<div class="t" style="left:100.30px;top:571.00px;font-size:15px;color:#000;transform:scaleX(1.0193);">build.gradle</div>
<div class="t" style="left:184.30px;top:571.00px;font-size:15px;color:#8c8c8c;transform:scaleX(0.9552);">(Project: Restaurant)</div>
<div class="t" style="left:325.00px;top:572.00px;font-size:13px;color:#a0a0a0;letter-spacing:0.55px;">6/30/2020 10:42 AM, 723 B</div>
<svg class="s" style="left:76.8px;top:588px;" width="19" height="15" viewBox="0 0 19 15"><path d="M0.5 14 C0.3 8 2 4 6 3 C9 2.2 12 2.8 14 4.5 C15.5 5.5 16.5 5 17 4 C17.6 2.8 17 1.3 16 1.3 C15.3 1.3 15 2 15.3 2.5 L14.5 1.8 C14.5 0.5 15.5 0 16.5 0 C18.5 0.2 19 2.5 18.5 4 C17.8 6.5 16 8 15 9.5 C14.5 10.5 14.8 12.5 14.5 14 H12 C12 12.5 11 11.8 10 11.8 C9 11.8 8.5 12.5 8.5 14 H6 C6 12.5 5 11.8 4 11.8 C3 11.8 2.5 12.5 2.5 14 Z" fill="#a9b3ba"/><path d="M3.5 5.5 Q5 7.5 7.5 6" stroke="#ffffff" stroke-width="0.8" fill="none" opacity=".8"/></svg>
<div class="t" style="left:100.30px;top:596.00px;font-size:15px;color:#000;transform:scaleX(1.0193);">build.gradle</div>
<div class="t" style="left:184.30px;top:596.00px;font-size:15px;color:#8c8c8c;transform:scaleX(1.0065);">(Module: app)</div>
<div class="t" style="left:285.90px;top:597.00px;font-size:13px;color:#a0a0a0;letter-spacing:0.55px;">9/1/2020 4:15 PM, 2.83 kB A minute ago</div>
<svg class="s" style="left:79px;top:612px;" width="17" height="18" viewBox="0 0 17 18"><path d="M4 0 H11 V9 H0 V4 Z" fill="#9aa7b0"/><path d="M0 4 L4 0 V4 Z" fill="#d6dde2"/><rect x="0" y="9" width="4" height="9" fill="#9aa7b0"/><rect x="6" y="11" width="2.5" height="7" fill="#f98b2b"/><rect x="9.5" y="8" width="2.5" height="10" fill="#f4af3d"/><rect x="13" y="5" width="2.5" height="13" fill="#62b543"/></svg>
<div class="t" style="left:100.30px;top:621.00px;font-size:15px;color:#000;transform:scaleX(1.0217);">gradle-wrapper.properties</div>
<div class="t" style="left:279.50px;top:621.00px;font-size:15px;color:#8c8c8c;transform:scaleX(0.9698);">(Gradle Version)</div>
<div class="t" style="left:393.80px;top:622.00px;font-size:13px;color:#a0a0a0;letter-spacing:0.55px;">6/9/2020 10:33 PM, 200 B</div>
<svg class="s" style="left:80px;top:637px;" width="15" height="18" viewBox="0 0 15 18"><path d="M5 0 H14 V18 H0 V5 Z" fill="#9aa7b0"/><path d="M0 5 L5 0 V5 Z" fill="#d6dde2"/><path d="M3 9 H11 M3 11.5 H11 M3 14 H9" stroke="#555" stroke-width="1.1"/></svg>
<div class="t" style="left:100.30px;top:646.00px;font-size:15px;color:#000;transform:scaleX(1.0073);">proguard-rules.pro</div>
<div class="t" style="left:229.70px;top:646.00px;font-size:15px;color:#8c8c8c;transform:scaleX(0.9656);">(ProGuard Rules for app)</div>
<div class="t" style="left:400.70px;top:647.00px;font-size:13px;color:#a0a0a0;letter-spacing:0.55px;">6/9/2020 10:33 PM, 751 B</div>
<svg class="s" style="left:79px;top:662px;" width="17" height="18" viewBox="0 0 17 18"><path d="M4 0 H11 V9 H0 V4 Z" fill="#9aa7b0"/><path d="M0 4 L4 0 V4 Z" fill="#d6dde2"/><rect x="0" y="9" width="4" height="9" fill="#9aa7b0"/><rect x="6" y="11" width="2.5" height="7" fill="#f98b2b"/><rect x="9.5" y="8" width="2.5" height="10" fill="#f4af3d"/><rect x="13" y="5" width="2.5" height="13" fill="#62b543"/></svg>
<div class="t" style="left:100.30px;top:671.00px;font-size:15px;color:#000;transform:scaleX(1.0062);">gradle.properties</div>
<div class="t" style="left:218.70px;top:671.00px;font-size:15px;color:#8c8c8c;transform:scaleX(0.9745);">(Project Properties)</div>
<div class="t" style="left:353.00px;top:672.00px;font-size:13px;color:#a0a0a0;letter-spacing:0.55px;">6/9/2020 10:33 PM, 1.31 kB</div>
<svg class="s" style="left:76.8px;top:688px;" width="19" height="15" viewBox="0 0 19 15"><path d="M0.5 14 C0.3 8 2 4 6 3 C9 2.2 12 2.8 14 4.5 C15.5 5.5 16.5 5 17 4 C17.6 2.8 17 1.3 16 1.3 C15.3 1.3 15 2 15.3 2.5 L14.5 1.8 C14.5 0.5 15.5 0 16.5 0 C18.5 0.2 19 2.5 18.5 4 C17.8 6.5 16 8 15 9.5 C14.5 10.5 14.8 12.5 14.5 14 H12 C12 12.5 11 11.8 10 11.8 C9 11.8 8.5 12.5 8.5 14 H6 C6 12.5 5 11.8 4 11.8 C3 11.8 2.5 12.5 2.5 14 Z" fill="#a9b3ba"/><path d="M3.5 5.5 Q5 7.5 7.5 6" stroke="#ffffff" stroke-width="0.8" fill="none" opacity=".8"/></svg>
<div class="t" style="left:100.30px;top:696.00px;font-size:15px;color:#000;transform:scaleX(0.9857);">settings.gradle</div>
<div class="t" style="left:201.60px;top:696.00px;font-size:15px;color:#8c8c8c;transform:scaleX(0.9722);">(Project Settings)</div>
<div class="t" style="left:322.00px;top:697.00px;font-size:13px;color:#a0a0a0;letter-spacing:0.55px;">6/9/2020 10:33 PM, 47 B</div>
<svg class="s" style="left:79px;top:712px;" width="17" height="18" viewBox="0 0 17 18"><path d="M4 0 H11 V9 H0 V4 Z" fill="#9aa7b0"/><path d="M0 4 L4 0 V4 Z" fill="#d6dde2"/><rect x="0" y="9" width="4" height="9" fill="#9aa7b0"/><rect x="6" y="11" width="2.5" height="7" fill="#f98b2b"/><rect x="9.5" y="8" width="2.5" height="10" fill="#f4af3d"/><rect x="13" y="5" width="2.5" height="13" fill="#62b543"/></svg>
<div class="t" style="left:100.30px;top:721.00px;font-size:15px;color:#000;transform:scaleX(1.0088);">local.properties</div>
<div class="t" style="left:207.50px;top:721.00px;font-size:15px;color:#8c8c8c;transform:scaleX(0.9636);">(SDK Location)</div>
<div class="t" style="left:314.00px;top:722.00px;font-size:13px;color:#a0a0a0;letter-spacing:0.55px;">9/1/2020 4:06 PM, 340 B</div>
<div class="r" style="left:491px;top:106px;width:1401px;height:34px;background:transparent;"></div>
<div class="r" style="left:30px;top:962px;width:392px;height:10px;background:#dcdcdc;"></div>
<div class="r" style="left:130px;top:425px;width:183px;height:38px;background:transparent;border:4.5px solid #e8161d;box-sizing:border-box;"></div></div>
<div class="r" style="left:491px;top:72px;width:134px;height:30px;background:#fcfcfc;"></div>
<div class="r" style="left:491px;top:102px;width:134px;height:4px;background:#4083c9;"></div>
<svg class="s" style="left:502px;top:80px;" width="19" height="19" viewBox="0 0 19 19"><path d="M8 0 H15 V8 H4 V4 Z" fill="#9aa7b0"/><path d="M4 4 L8 0 V4 Z" fill="#d6dde2"/><rect x="0" y="9" width="19" height="10" fill="#f0865e"/><path d="M6.5 11 L3.5 14 L6.5 17 M12.5 11 L15.5 14 L12.5 17" stroke="#5a2a17" stroke-width="1.1" fill="none"/></svg>
<div class="t" style="left:526.00px;top:90.00px;font-size:15px;color:#000;transform:scaleX(0.9623);">strings.xml</div>
<svg class="s" style="left:605px;top:85px;" width="10" height="10" viewBox="0 0 10 10"><path d="M0.5 0.5 L9.5 9.5 M9.5 0.5 L0.5 9.5" stroke="#ababab" stroke-width="1.2"/></svg>
<div class="t" style="left:504.00px;top:124.00px;font-size:15px;color:#000;transform:scaleX(1.0042);">Edit translations for all locales in the translations editor.</div>
<div class="t" style="left:1654.00px;top:124.00px;font-size:15px;color:#4a78c2;transform:scaleX(1.0204);">Open editor</div>
<div class="t" style="left:1759.50px;top:124.00px;font-size:15px;color:#4a78c2;transform:scaleX(1.0450);">Hide notification</div>
<div class="r" style="left:491px;top:165px;width:68px;height:25px;background:#fffae3;"></div>
<div class="r" style="left:560px;top:165px;width:1320px;height:25px;background:#fffae3;"></div>
<div class="r" style="left:1467px;top:140px;width:1px;height:805px;background:#e8e8e8;"></div>
<div class="r" style="left:594px;top:165px;width:450px;height:25px;background:#5b77ae;"></div>
<div class="t" style="font-family:'Liberation Mono',monospace;font-size:15px;color:#999999;left:505.00px;top:155px">1</div>
<div class="t" style="font-family:'Liberation Mono',monospace;font-size:15px;left:567.4px;top:155px"><span style="color:#000;">&lt;</span><span style="color:#000080;font-weight:700;">resources</span><span style="color:#000;">&gt;</span></div>
<div class="t" style="font-family:'Liberation Mono',monospace;font-size:15px;color:#999999;left:505.00px;top:180px">2</div>
<div class="t" style="font-family:'Liberation Mono',monospace;font-size:15px;left:567.4px;top:180px"><span style="color:#ffffff;">    </span><span style="color:#ffffff;">&lt;</span><span style="color:#ffffff;font-weight:700;">string</span><span style="color:#ffffff;"> </span><span style="color:#ffffff;font-weight:700;">name</span><span style="color:#ffffff;font-weight:700;">=</span><span style="color:#ffffff;font-weight:700;">&quot;app_name&quot;</span><span style="color:#ffffff;">&gt;</span><span style="color:#ffffff;">FoodDelivery App</span><span style="color:#ffffff;">&lt;/</span><span style="color:#ffffff;font-weight:700;">string</span><span style="color:#ffffff;">&gt;</span></div>
<div class="t" style="font-family:'Liberation Mono',monospace;font-size:15px;color:#999999;left:505.00px;top:205px">3</div>
<div class="t" style="font-family:'Liberation Mono',monospace;font-size:15px;left:567.4px;top:205px"><span style="color:#000;">    </span><span style="color:#808080;font-style:italic;">&lt;!--GILROY--&gt;</span></div>
<div class="t" style="font-family:'Liberation Mono',monospace;font-size:15px;color:#999999;left:505.00px;top:230px">4</div>
<div class="t" style="font-family:'Liberation Mono',monospace;font-size:15px;left:567.4px;top:230px"><span style="color:#000;">    </span><span style="color:#000;">&lt;</span><span style="color:#000080;font-weight:700;">string</span><span style="color:#000;"> </span><span style="color:#0000ff;font-weight:700;">name</span><span style="color:#008000;font-weight:700;">=</span><span style="color:#008000;font-weight:700;">&quot;font_regular&quot;</span><span style="color:#000;">&gt;</span><span style="color:#000;">fonts/Roboto-Regular.ttf</span><span style="color:#000;">&lt;/</span><span style="color:#000080;font-weight:700;">string</span><span style="color:#000;">&gt;</span></div>
<div class="t" style="font-family:'Liberation Mono',monospace;font-size:15px;color:#999999;left:505.00px;top:255px">5</div>
<div class="t" style="font-family:'Liberation Mono',monospace;font-size:15px;left:567.4px;top:255px"><span style="color:#000;">    </span><span style="color:#000;">&lt;</span><span style="color:#000080;font-weight:700;">string</span><span style="color:#000;"> </span><span style="color:#0000ff;font-weight:700;">name</span><span style="color:#008000;font-weight:700;">=</span><span style="color:#008000;font-weight:700;">&quot;font_medium&quot;</span><span style="color:#000;">&gt;</span><span style="color:#000;">fonts/Roboto-Medium.ttf</span><span style="color:#000;">&lt;/</span><span style="color:#000080;font-weight:700;">string</span><span style="color:#000;">&gt;</span></div>
<div class="t" style="font-family:'Liberation Mono',monospace;font-size:15px;color:#999999;left:505.00px;top:280px">6</div>
<div class="t" style="font-family:'Liberation Mono',monospace;font-size:15px;left:567.4px;top:280px"><span style="color:#000;">    </span><span style="color:#000;">&lt;</span><span style="color:#000080;font-weight:700;">string</span><span style="color:#000;"> </span><span style="color:#0000ff;font-weight:700;">name</span><span style="color:#008000;font-weight:700;">=</span><span style="color:#008000;font-weight:700;">&quot;font_bold&quot;</span><span style="color:#000;">&gt;</span><span style="color:#000;">fonts/Roboto-Bold.ttf</span><span style="color:#000;">&lt;/</span><span style="color:#000080;font-weight:700;">string</span><span style="color:#000;">&gt;</span></div>
<div class="t" style="font-family:'Liberation Mono',monospace;font-size:15px;color:#999999;left:505.00px;top:305px">7</div>
<div class="t" style="font-family:'Liberation Mono',monospace;font-size:15px;left:567.4px;top:305px"><span style="color:#000;">    </span><span style="color:#000;">&lt;</span><span style="color:#000080;font-weight:700;">string</span><span style="color:#000;"> </span><span style="color:#0000ff;font-weight:700;">name</span><span style="color:#008000;font-weight:700;">=</span><span style="color:#008000;font-weight:700;">&quot;font_black&quot;</span><span style="color:#000;">&gt;</span><span style="color:#000;">fonts/Roboto-Black.ttf</span><span style="color:#000;">&lt;/</span><span style="color:#000080;font-weight:700;">string</span><span style="color:#000;">&gt;</span></div>
<div class="t" style="font-family:'Liberation Mono',monospace;font-size:15px;color:#999999;left:505.00px;top:330px">8</div>
<div class="t" style="font-family:'Liberation Mono',monospace;font-size:15px;left:567.4px;top:330px"><span style="color:#000;">    </span><span style="color:#000;">&lt;</span><span style="color:#000080;font-weight:700;">string</span><span style="color:#000;"> </span><span style="color:#0000ff;font-weight:700;">name</span><span style="color:#008000;font-weight:700;">=</span><span style="color:#008000;font-weight:700;">&quot;font_thin&quot;</span><span style="color:#000;">&gt;</span><span style="color:#000;">fonts/Roboto-Thin.ttf</span><span style="color:#000;">&lt;/</span><span style="color:#000080;font-weight:700;">string</span><span style="color:#000;">&gt;</span></div>
<div class="t" style="font-family:'Liberation Mono',monospace;font-size:15px;color:#999999;left:505.00px;top:355px">9</div>
<div class="t" style="font-family:'Liberation Mono',monospace;font-size:15px;left:567.4px;top:355px"><span style="color:#000;">    </span><span style="color:#000;">&lt;</span><span style="color:#000080;font-weight:700;">string</span><span style="color:#000;"> </span><span style="color:#0000ff;font-weight:700;">name</span><span style="color:#008000;font-weight:700;">=</span><span style="color:#008000;font-weight:700;">&quot;font_light&quot;</span><span style="color:#000;">&gt;</span><span style="color:#000;">fonts/Roboto-Light.ttf</span><span style="color:#000;">&lt;/</span><span style="color:#000080;font-weight:700;">string</span><span style="color:#000;">&gt;</span></div>
<div class="t" style="font-family:'Liberation Mono',monospace;font-size:15px;color:#999999;left:496.00px;top:380px">10</div>
<div class="t" style="font-family:'Liberation Mono',monospace;font-size:15px;left:567.4px;top:380px"><span style="color:#000;">    </span><span style="color:#000;">&lt;</span><span style="color:#000080;font-weight:700;">string</span><span style="color:#000;"> </span><span style="color:#0000ff;font-weight:700;">name</span><span style="color:#008000;font-weight:700;">=</span><span style="color:#008000;font-weight:700;">&quot;font_italic&quot;</span><span style="color:#000;">&gt;</span><span style="color:#000;">fonts/Roboto-Italic.ttf</span><span style="color:#000;">&lt;/</span><span style="color:#000080;font-weight:700;">string</span><span style="color:#000;">&gt;</span></div>
<div class="t" style="font-family:'Liberation Mono',monospace;font-size:15px;color:#999999;left:496.00px;top:405px">11</div>
<div class="t" style="font-family:'Liberation Mono',monospace;font-size:15px;color:#999999;left:496.00px;top:430px">12</div>
<div class="t" style="font-family:'Liberation Mono',monospace;font-size:15px;left:567.4px;top:430px"><span style="color:#000;">    </span><span style="color:#808080;font-style:italic;">&lt;!--MARK_WEB--&gt;</span></div>
<div class="t" style="font-family:'Liberation Mono',monospace;font-size:15px;color:#999999;left:496.00px;top:455px">13</div>
<div class="t" style="font-family:'Liberation Mono',monospace;font-size:15px;left:567.4px;top:455px"><span style="color:#000;">    </span><span style="color:#000;">&lt;</span><span style="color:#000080;font-weight:700;">string</span><span style="color:#000;"> </span><span style="color:#0000ff;font-weight:700;">name</span><span style="color:#008000;font-weight:700;">=</span><span style="color:#008000;font-weight:700;">&quot;font_mark_web_thin&quot;</span><span style="color:#000;">&gt;</span><span style="color:#000;">fonts/MARK_WEB_W04_BLACK.TTF</span><span style="color:#000;">&lt;/</span><span style="color:#000080;font-weight:700;">string</span><span style="color:#000;">&gt;</span></div>
<div class="t" style="font-family:'Liberation Mono',monospace;font-size:15px;color:#999999;left:496.00px;top:480px">14</div>
<div class="t" style="font-family:'Liberation Mono',monospace;font-size:15px;color:#999999;left:496.00px;top:505px">15</div>
<div class="t" style="font-family:'Liberation Mono',monospace;font-size:15px;left:567.4px;top:505px"><span style="color:#000;">    </span><span style="color:#000;">&lt;</span><span style="color:#000080;font-weight:700;">string</span><span style="color:#000;"> </span><span style="color:#0000ff;font-weight:700;">name</span><span style="color:#008000;font-weight:700;">=</span><span style="color:#008000;font-weight:700;">&quot;logout&quot;</span><span style="color:#000;">&gt;</span><span style="color:#000;">Are you sure to logout from this app ?</span><span style="color:#000;">&lt;/</span><span style="color:#000080;font-weight:700;">string</span><span style="color:#000;">&gt;</span></div>
<div class="t" style="font-family:'Liberation Mono',monospace;font-size:15px;color:#999999;left:496.00px;top:530px">16</div>
<div class="t" style="font-family:'Liberation Mono',monospace;font-size:15px;left:567.4px;top:530px"><span style="color:#000;">    </span><span style="color:#000;">&lt;</span><span style="color:#000080;font-weight:700;">string</span><span style="color:#000;"> </span><span style="color:#0000ff;font-weight:700;">name</span><span style="color:#008000;font-weight:700;">=</span><span style="color:#008000;font-weight:700;">&quot;exit_screen&quot;</span><span style="color:#000;">&gt;</span><span style="color:#000;">Sure if you wan\&#x27;t to exits this app</span><span style="color:#000;">&lt;/</span><span style="color:#000080;font-weight:700;">string</span><span style="color:#000;">&gt;</span></div>
<div class="t" style="font-family:'Liberation Mono',monospace;font-size:15px;color:#999999;left:496.00px;top:555px">17</div>
<div class="t" style="font-family:'Liberation Mono',monospace;font-size:15px;left:567.4px;top:555px"><span style="color:#000;">    </span><span style="color:#000;">&lt;</span><span style="color:#000080;font-weight:700;">string</span><span style="color:#000;"> </span><span style="color:#0000ff;font-weight:700;">name</span><span style="color:#008000;font-weight:700;">=</span><span style="color:#008000;font-weight:700;">&quot;no_internet&quot;</span><span style="color:#000;">&gt;</span><span style="color:#000;">No internet connection\nGo to setting and connect to network.</span><span style="color:#000;">&lt;/</span><span style="color:#000080;font-weight:700;">string</span><span style="color:#000;">&gt;</span></div>
<div class="t" style="font-family:'Liberation Mono',monospace;font-size:15px;color:#999999;left:496.00px;top:580px">18</div>
<div class="t" style="font-family:'Liberation Mono',monospace;font-size:15px;left:567.4px;top:580px"><span style="color:#000;">    </span><span style="color:#000;">&lt;</span><span style="color:#000080;font-weight:700;">string</span><span style="color:#000;"> </span><span style="color:#0000ff;font-weight:700;">name</span><span style="color:#008000;font-weight:700;">=</span><span style="color:#008000;font-weight:700;">&quot;error_msg&quot;</span><span style="color:#000;">&gt;</span><span style="color:#000;">Please try again something went to wrong</span><span style="color:#000;">&lt;/</span><span style="color:#000080;font-weight:700;">string</span><span style="color:#000;">&gt;</span></div>
<div class="t" style="font-family:'Liberation Mono',monospace;font-size:15px;color:#999999;left:496.00px;top:605px">19</div>
<div class="t" style="font-family:'Liberation Mono',monospace;font-size:15px;left:567.4px;top:605px"><span style="color:#000;">    </span><span style="color:#000;">&lt;</span><span style="color:#000080;font-weight:700;">string</span><span style="color:#000;"> </span><span style="color:#0000ff;font-weight:700;">name</span><span style="color:#008000;font-weight:700;">=</span><span style="color:#008000;font-weight:700;">&quot;dialog_permission_title&quot;</span><span style="color:#000;">&gt;</span><span style="color:#000;">Grant Permissions</span><span style="color:#000;">&lt;/</span><span style="color:#000080;font-weight:700;">string</span><span style="color:#000;">&gt;</span></div>
<div class="t" style="font-family:'Liberation Mono',monospace;font-size:15px;color:#999999;left:496.00px;top:630px">20</div>
<div class="t" style="font-family:'Liberation Mono',monospace;font-size:15px;left:567.4px;top:630px"><span style="color:#000;">    </span><span style="color:#000;">&lt;</span><span style="color:#000080;font-weight:700;">string</span><span style="color:#000;"> </span><span style="color:#0000ff;font-weight:700;">name</span><span style="color:#008000;font-weight:700;">=</span><span style="color:#008000;font-weight:700;">&quot;dialog_permission_message&quot;</span><span style="color:#000;">&gt;</span><span style="color:#000;">This app needs permission to use this feature. You can grant them in app settings.</span><span style="color:#000;">&lt;/</span><span style="color:#000080;font-weight:700;">string</span><span style="color:#000;">&gt;</span></div>
<div class="t" style="font-family:'Liberation Mono',monospace;font-size:15px;color:#999999;left:496.00px;top:655px">21</div>
<div class="t" style="font-family:'Liberation Mono',monospace;font-size:15px;left:567.4px;top:655px"><span style="color:#000;">    </span><span style="color:#000;">&lt;</span><span style="color:#000080;font-weight:700;">string</span><span style="color:#000;"> </span><span style="color:#0000ff;font-weight:700;">name</span><span style="color:#008000;font-weight:700;">=</span><span style="color:#008000;font-weight:700;">&quot;go_to_settings&quot;</span><span style="color:#000;">&gt;</span><span style="color:#000;">GOTO SETTINGS</span><span style="color:#000;">&lt;/</span><span style="color:#000080;font-weight:700;">string</span><span style="color:#000;">&gt;</span></div>
<div class="t" style="font-family:'Liberation Mono',monospace;font-size:15px;color:#999999;left:496.00px;top:680px">22</div>
<div class="t" style="font-family:'Liberation Mono',monospace;font-size:15px;color:#999999;left:496.00px;top:705px">23</div>
<div class="t" style="font-family:'Liberation Mono',monospace;font-size:15px;left:567.4px;top:705px"><span style="color:#000;">    </span><span style="color:#000;">&lt;</span><span style="color:#000080;font-weight:700;">string</span><span style="color:#000;"> </span><span style="color:#0000ff;font-weight:700;">name</span><span style="color:#008000;font-weight:700;">=</span><span style="color:#008000;font-weight:700;">&quot;language_english&quot;</span><span style="color:#000;">&gt;</span><span style="color:#000;">en</span><span style="color:#000;">&lt;/</span><span style="color:#000080;font-weight:700;">string</span><span style="color:#000;">&gt;</span></div>
<div class="t" style="font-family:'Liberation Mono',monospace;font-size:15px;color:#999999;left:496.00px;top:730px">24</div>
<div class="t" style="font-family:'Liberation Mono',monospace;font-size:15px;left:567.4px;top:730px"><span style="color:#000;">    </span><span style="color:#000;">&lt;</span><span style="color:#000080;font-weight:700;">string</span><span style="color:#000;"> </span><span style="color:#0000ff;font-weight:700;">name</span><span style="color:#008000;font-weight:700;">=</span><span style="color:#008000;font-weight:700;">&quot;language_hindi&quot;</span><span style="color:#000;">&gt;</span><span style="color:#000;">ar</span><span style="color:#000;">&lt;/</span><span style="color:#000080;font-weight:700;">string</span><span style="color:#000;">&gt;</span></div>
<div class="t" style="font-family:'Liberation Mono',monospace;font-size:15px;color:#999999;left:496.00px;top:755px">25</div>
<div class="t" style="font-family:'Liberation Mono',monospace;font-size:15px;color:#999999;left:496.00px;top:780px">26</div>
<div class="t" style="font-family:'Liberation Mono',monospace;font-size:15px;left:567.4px;top:780px"><span style="color:#000;">    </span><span style="color:#000;">&lt;</span><span style="color:#000080;font-weight:700;">string</span><span style="color:#000;"> </span><span style="color:#0000ff;font-weight:700;">name</span><span style="color:#008000;font-weight:700;">=</span><span style="color:#008000;font-weight:700;">&quot;validation_name&quot;</span><span style="color:#000;">&gt;</span><span style="color:#000;">Please enter name.</span><span style="color:#000;">&lt;/</span><span style="color:#000080;font-weight:700;">string</span><span style="color:#000;">&gt;</span></div>
<div class="t" style="font-family:'Liberation Mono',monospace;font-size:15px;color:#999999;left:496.00px;top:805px">27</div>
<div class="t" style="font-family:'Liberation Mono',monospace;font-size:15px;left:567.4px;top:805px"><span style="color:#000;">    </span><span style="color:#000;">&lt;</span><span style="color:#000080;font-weight:700;">string</span><span style="color:#000;"> </span><span style="color:#0000ff;font-weight:700;">name</span><span style="color:#008000;font-weight:700;">=</span><span style="color:#008000;font-weight:700;">&quot;validation_email&quot;</span><span style="color:#000;">&gt;</span><span style="color:#000;">Please enter email.</span><span style="color:#000;">&lt;/</span><span style="color:#000080;font-weight:700;">string</span><span style="color:#000;">&gt;</span></div>
<div class="t" style="font-family:'Liberation Mono',monospace;font-size:15px;color:#999999;left:496.00px;top:830px">28</div>
<div class="t" style="font-family:'Liberation Mono',monospace;font-size:15px;left:567.4px;top:830px"><span style="color:#000;">    </span><span style="color:#000;">&lt;</span><span style="color:#000080;font-weight:700;">string</span><span style="color:#000;"> </span><span style="color:#0000ff;font-weight:700;">name</span><span style="color:#008000;font-weight:700;">=</span><span style="color:#008000;font-weight:700;">&quot;validation_password&quot;</span><span style="color:#000;">&gt;</span><span style="color:#000;">Please enter password.</span><span style="color:#000;">&lt;/</span><span style="color:#000080;font-weight:700;">string</span><span style="color:#000;">&gt;</span></div>
<div class="t" style="font-family:'Liberation Mono',monospace;font-size:15px;color:#999999;left:496.00px;top:855px">29</div>
<div class="t" style="font-family:'Liberation Mono',monospace;font-size:15px;left:567.4px;top:855px"><span style="color:#000;">    </span><span style="color:#000;">&lt;</span><span style="color:#000080;font-weight:700;">string</span><span style="color:#000;"> </span><span style="color:#0000ff;font-weight:700;">name</span><span style="color:#008000;font-weight:700;">=</span><span style="color:#008000;font-weight:700;">&quot;validation_oldpassword&quot;</span><span style="color:#000;">&gt;</span><span style="color:#000;">Please enter old password.</span><span style="color:#000;">&lt;/</span><span style="color:#000080;font-weight:700;">string</span><span style="color:#000;">&gt;</span></div>
<div class="t" style="font-family:'Liberation Mono',monospace;font-size:15px;color:#999999;left:496.00px;top:880px">30</div>
<div class="t" style="font-family:'Liberation Mono',monospace;font-size:15px;left:567.4px;top:880px"><span style="color:#000;">    </span><span style="color:#000;">&lt;</span><span style="color:#000080;font-weight:700;">string</span><span style="color:#000;"> </span><span style="color:#0000ff;font-weight:700;">name</span><span style="color:#008000;font-weight:700;">=</span><span style="color:#008000;font-weight:700;">&quot;validation_cpassword&quot;</span><span style="color:#000;">&gt;</span><span style="color:#000;">Please enter confirm password.</span><span style="color:#000;">&lt;/</span><span style="color:#000080;font-weight:700;">string</span><span style="color:#000;">&gt;</span></div>
<div class="t" style="font-family:'Liberation Mono',monospace;font-size:15px;color:#999999;left:496.00px;top:905px">31</div>
<div class="t" style="font-family:'Liberation Mono',monospace;font-size:15px;left:567.4px;top:905px"><span style="color:#000;">    </span><span style="color:#000;">&lt;</span><span style="color:#000080;font-weight:700;">string</span><span style="color:#000;"> </span><span style="color:#0000ff;font-weight:700;">name</span><span style="color:#008000;font-weight:700;">=</span><span style="color:#008000;font-weight:700;">&quot;validation_valid_email&quot;</span><span style="color:#000;">&gt;</span><span style="color:#000;">Please enter valid email.</span><span style="color:#000;">&lt;/</span><span style="color:#000080;font-weight:700;">string</span><span style="color:#000;">&gt;</span></div>
<div class="t" style="font-family:'Liberation Mono',monospace;font-size:15px;color:#999999;left:496.00px;top:930px">32</div>
<div class="t" style="font-family:'Liberation Mono',monospace;font-size:15px;left:567.4px;top:930px"><span style="color:#000;">    </span><span style="color:#000;">&lt;</span><span style="color:#000080;font-weight:700;">string</span><span style="color:#000;"> </span><span style="color:#0000ff;font-weight:700;">name</span><span style="color:#008000;font-weight:700;">=</span><span style="color:#008000;font-weight:700;">&quot;validation_valid_cpassword&quot;</span><span style="color:#000;">&gt;</span><span style="color:#000;">Password and confirm password must be same.</span><span style="color:#000;">&lt;/</span><span style="color:#000080;font-weight:700;">string</span><span style="color:#000;">&gt;</span></div>
<svg class="s" style="left:0;top:0" width="1920" height="1080"><path d="M639.4 210.0 L641.4 211.5 L643.4 210.0 L645.4 211.5 L647.4 210.0 L649.4 211.5 L651.4 210.0 L653.4 211.5 L655.4 210.0 L657.4 211.5 L659.4 210.0 L661.4 211.5 L663.4 210.0 L665.4 211.5 L667.4 210.0 L669.4 211.5 L671.4 210.0 L673.4 211.5 L675.4 210.0 L677.4 211.5 L679.4 210.0 L681.4 211.5 L683.4 210.0 L685.4 211.5 L687.4 210.0 L689.4 211.5 L691.4 210.0 L693.4 211.5" stroke="#7fb27f" stroke-width="0.8" fill="none"/></svg>
<svg class="s" style="left:0;top:0" width="1920" height="1080"><path d="M828.4 860.0 L830.4 861.5 L832.4 860.0 L834.4 861.5 L836.4 860.0 L838.4 861.5 L840.4 860.0 L842.4 861.5 L844.4 860.0 L846.4 861.5 L848.4 860.0 L850.4 861.5 L852.4 860.0 L854.4 861.5 L856.4 860.0 L858.4 861.5 L860.4 860.0 L862.4 861.5 L864.4 860.0 L866.4 861.5 L868.4 860.0 L870.4 861.5 L872.4 860.0 L874.4 861.5 L876.4 860.0 L878.4 861.5 L880.4 860.0 L882.4 861.5 L884.4 860.0 L886.4 861.5 L888.4 860.0 L890.4 861.5 L892.4 860.0 L894.4 861.5 L896.4 860.0 L898.4 861.5 L900.4 860.0 L902.4 861.5 L904.4 860.0 L906.4 861.5 L908.4 860.0 L910.4 861.5 L912.4 860.0 L914.4 861.5 L916.4 860.0 L918.4 861.5 L920.4 860.0 L922.4 861.5 L924.4 860.0 L926.4 861.5 L928.4 860.0" stroke="#7fb27f" stroke-width="0.8" fill="none"/></svg>
<svg class="s" style="left:0;top:0" width="1920" height="1080"><path d="M828.4 885.0 L830.4 886.5 L832.4 885.0 L834.4 886.5 L836.4 885.0 L838.4 886.5 L840.4 885.0 L842.4 886.5 L844.4 885.0 L846.4 886.5 L848.4 885.0 L850.4 886.5 L852.4 885.0 L854.4 886.5 L856.4 885.0 L858.4 886.5 L860.4 885.0 L862.4 886.5 L864.4 885.0 L866.4 886.5 L868.4 885.0 L870.4 886.5 L872.4 885.0 L874.4 886.5 L876.4 885.0 L878.4 886.5 L880.4 885.0 L882.4 886.5 L884.4 885.0 L886.4 886.5 L888.4 885.0 L890.4 886.5 L892.4 885.0 L894.4 886.5 L896.4 885.0 L898.4 886.5 L900.4 885.0 L902.4 886.5 L904.4 885.0 L906.4 886.5 L908.4 885.0 L910.4 886.5" stroke="#7fb27f" stroke-width="0.8" fill="none"/></svg>
<svg class="s" style="left:0;top:0" width="1920" height="1080"><path d="M882.4 935.0 L884.4 936.5 L886.4 935.0 L888.4 936.5 L890.4 935.0 L892.4 936.5 L894.4 935.0 L896.4 936.5 L898.4 935.0 L900.4 936.5 L902.4 935.0 L904.4 936.5 L906.4 935.0 L908.4 936.5 L910.4 935.0 L912.4 936.5 L914.4 935.0 L916.4 936.5 L918.4 935.0 L920.4 936.5 L922.4 935.0 L924.4 936.5 L926.4 935.0 L928.4 936.5 L930.4 935.0 L932.4 936.5 L934.4 935.0 L936.4 936.5 L938.4 935.0 L940.4 936.5 L942.4 935.0 L944.4 936.5 L946.4 935.0 L948.4 936.5 L950.4 935.0 L952.4 936.5 L954.4 935.0 L956.4 936.5 L958.4 935.0 L960.4 936.5 L962.4 935.0 L964.4 936.5" stroke="#7fb27f" stroke-width="0.8" fill="none"/></svg>
<svg class="s" style="left:553px;top:145px;" width="12" height="17" viewBox="0 0 12 17"><path d="M0.5 0.5 H11.5 V10 L6 16 L0.5 10 Z" fill="#ffffff" stroke="#c8c8c8" stroke-width="1"/><path d="M3 6 H9" stroke="#c8c8c8" stroke-width="1"/></svg>
<svg class="s" style="left:577px;top:145px;" width="15" height="19" viewBox="0 0 15 19"><circle cx="7.3" cy="6.5" r="6.3" fill="#f0a30a"/><path d="M3.5 15 H11 M4.5 17.5 H10" stroke="#9a9a9a" stroke-width="1.6"/></svg>
<svg class="s" style="left:1876px;top:142px;" width="16" height="16" viewBox="0 0 16 16"><path d="M4 7 L8 10.3 L14.5 2" stroke="#59a869" stroke-width="2.8" fill="none"/><path d="M3.5 13.8 L6.5 11.3 L9.5 14 L12.5 11.3 L15 13.5" stroke="#59a869" stroke-width="1.2" fill="none"/></svg>
<div class="r" style="left:1880px;top:160px;width:12px;height:553px;background:#dfdfdf;"></div>
<div class="r" style="left:566px;top:932px;width:34px;height:12px;background:#dfdfdf;border:1px solid #d0d0d0;box-sizing:border-box;"></div>
<div class="t" style="left:571.00px;top:961.40px;font-size:15px;color:#6e6e6e;transform:scaleX(0.9408);">resources</div>
<svg class="s" style="left:648px;top:957.5px;" width="4" height="7" viewBox="0 0 4 7"><path d="M0.5 0.5 L3.5 3.5 L0.5 6.5" stroke="#a8a8a8" stroke-width="1" fill="none"/></svg>
<div class="t" style="left:663.80px;top:961.40px;font-size:15px;color:#6e6e6e;transform:scaleX(0.9946);">string</div>
<div class="r" style="left:807px;top:155px;width:168px;height:46px;background:transparent;border:4.5px solid #e8161d;box-sizing:border-box;"></div>
<svg class="s" style="left:1899px;top:84.5px;" width="15" height="13" viewBox="0 0 15 13"><g transform="scale(0.77,0.9)"><path d="M0.5 14 C0.3 8 2 4 6 3 C9 2.2 12 2.8 14 4.5 C15.5 5.5 16.5 5 17 4 C17.6 2.8 17 1.3 16 1.3 C15.3 1.3 15 2 15.3 2.5 L14.5 1.8 C14.5 0.5 15.5 0 16.5 0 C18.5 0.2 19 2.5 18.5 4 C17.8 6.5 16 8 15 9.5 C14.5 10.5 14.8 12.5 14.5 14 H12 C12 12.5 11 11.8 10 11.8 C9 11.8 8.5 12.5 8.5 14 H6 C6 12.5 5 11.8 4 11.8 C3 11.8 2.5 12.5 2.5 14 Z" fill="#6e6e6e"/></g></svg>
<div class="t" style="left:1905.01px;top:106.00px;font-size:13px;color:#000;transform:rotate(90deg) scaleX(0.9615);">Gradle</div>
<svg class="s" style="left:1897px;top:173.5px;" width="20" height="19" viewBox="0 0 20 19"><g transform="scale(0.97)"><path d="M0.3 18.7 C0.8 13 4.5 9.5 10 9.5 C15.5 9.5 19.2 13 19.6 18.7 Z" fill="#a4c639"/><path d="M4.3 7.8 L5.6 10.3 M15.7 7.8 L14.4 10.3" stroke="#a4c639" stroke-width="1.2"/><circle cx="4.8" cy="13.6" r="1" fill="#fff"/><circle cx="14.8" cy="13.6" r="1" fill="#fff"/><path d="M3.2 5.3 A7 7 0 0 1 16.8 5.3" stroke="#a4c639" stroke-width="1.4" fill="none"/><path d="M6 6.2 A4.17 4.17 0 0 1 14 6.2" stroke="#a4c639" stroke-width="1.4" fill="none"/><path d="M8.3 7 Q10 6.2 11.5 7.5" stroke="#8a9e3a" stroke-width="1.2" fill="none"/></g></svg>
<div class="t" style="left:1905.01px;top:197.70px;font-size:13px;color:#000;transform:rotate(90deg) scaleX(0.9837);">Android WiFi ADB</div>
<svg class="s" style="left:1900px;top:337px;" width="14" height="17" viewBox="0 0 14 17"><path d="M0.8 8.7 L8.3 0.2 H13.2 L3.4 11.3 Z" fill="#47c5fb"/><path d="M3.8 12.5 L8.6 7.7 H13.2 L6.6 14.8 Z" fill="#47c5fb"/><path d="M6.6 14.8 L9 12.3 L13.2 16.7 H8.6 Z" fill="#00569e"/></svg>
<div class="t" style="left:1905.01px;top:358.60px;font-size:13px;color:#000;transform:rotate(90deg) scaleX(0.9890);">Flutter Outline</div>
<svg class="s" style="left:1900px;top:476px;" width="14" height="17" viewBox="0 0 14 17"><path d="M0.8 8.7 L8.3 0.2 H13.2 L3.4 11.3 Z" fill="#47c5fb"/><path d="M3.8 12.5 L8.6 7.7 H13.2 L6.6 14.8 Z" fill="#47c5fb"/><path d="M6.6 14.8 L9 12.3 L13.2 16.7 H8.6 Z" fill="#00569e"/></svg>
<div class="t" style="left:1905.01px;top:497.80px;font-size:13px;color:#000;transform:rotate(90deg) scaleX(0.9819);">Flutter Inspector</div>
<svg class="s" style="left:1900px;top:629.4px;" width="14" height="17" viewBox="0 0 14 17"><path d="M0.8 8.7 L8.3 0.2 H13.2 L3.4 11.3 Z" fill="#47c5fb"/><path d="M3.8 12.5 L8.6 7.7 H13.2 L6.6 14.8 Z" fill="#47c5fb"/><path d="M6.6 14.8 L9 12.3 L13.2 16.7 H8.6 Z" fill="#00569e"/></svg>
<div class="t" style="left:1905.01px;top:651.00px;font-size:13px;color:#000;transform:rotate(90deg) scaleX(0.9861);">Flutter Performance</div>
<svg class="s" style="left:1900px;top:820.5px;" width="12" height="15" viewBox="0 0 12 15"><rect x="1" y="0.8" width="10" height="13.5" rx="1.2" fill="none" stroke="#6e6e6e" stroke-width="1.5"/><rect x="1" y="11" width="10" height="3.3" fill="#6e6e6e"/></svg>
<div class="t" style="left:1905.01px;top:841.00px;font-size:13px;color:#000;transform:rotate(90deg) scaleX(0.9837);">Device File Explorer</div>
<div class="r" style="left:1460px;top:886px;width:425px;height:78px;background:#f2f2f2;border:1px solid #c6c6c6;box-sizing:border-box;border-radius:2px;box-shadow:1px 3px 6px rgba(0,0,0,0.18);"></div>
<svg class="s" style="left:1474px;top:901px;" width="18" height="18" viewBox="0 0 18 18"><circle cx="9" cy="9" r="8.8" fill="#3e9bdb"/><circle cx="9" cy="5" r="1.4" fill="#fff"/><rect x="7.7" y="7.5" width="2.6" height="6.5" fill="#fff"/></svg>
<div class="t" style="left:1500.40px;top:911.50px;font-size:15px;color:#000;font-weight:700;transform:scaleX(0.9760);">Plugin Update Recommended</div>
<div class="t" style="left:1500.40px;top:938.00px;font-size:15px;color:#000;transform:scaleX(0.9955);">Android Gradle Plugin is ready to</div>
<div class="t" style="left:1724.20px;top:938.00px;font-size:15px;color:#4a78c2;">update</div>
<div class="t" style="left:1771.50px;top:938.00px;font-size:15px;color:#000;">.</div>
<svg class="s" style="left:42px;top:982.5px;" width="15" height="13" viewBox="0 0 15 13"><rect width="15" height="12.5" fill="#6e6e6e"/><path d="M2.5 3 L6 5.5 L2.5 8" stroke="#f2f2f2" stroke-width="1.3" fill="none"/><path d="M7 9.5 H12" stroke="#f2f2f2" stroke-width="1.3"/></svg>
<div class="t" style="left:63.40px;top:990.00px;font-size:14px;color:#000;transform:scaleX(0.9707);">Terminal</div>
<svg class="s" style="left:139px;top:982px;" width="16" height="16" viewBox="0 0 16 16"><g transform="scale(0.82)"><path d="M0.1 7.2 L6 1.5 L8 0.3 H11 L8.5 3.2 L19 14.6 L15.8 17.6 L9 10.5 L5.5 6.5 L2.3 10 Z" fill="#6e6e6e"/></g></svg>
<div class="t" style="left:160.30px;top:990.00px;font-size:14px;color:#000;transform:scaleX(0.9357);">Build</div>
<svg class="s" style="left:215.6px;top:985px;" width="14.5" height="10" viewBox="0 0 14.5 10"><path d="M0 1 H14 M0 4.5 H8 M0 8 H10" stroke="#6e6e6e" stroke-width="2"/></svg>
<div class="t" style="left:236.30px;top:990.00px;font-size:14px;color:#000;transform:scaleX(0.9427);">6: Logcat</div>
<div class="r" style="left:236px;top:997px;width:8px;height:1px;background:#000;"></div>
<svg class="s" style="left:319.7px;top:983.4px;" width="13.5" height="11" viewBox="0 0 13.5 11"><path d="M0 1.2 H2.5 M4 1.2 H13.5 M0 5.4 H2.5 M4 5.4 H13.5 M0 9.6 H2.5 M4 9.6 H13.5" stroke="#6e6e6e" stroke-width="2"/></svg>
<div class="t" style="left:339.40px;top:990.00px;font-size:14px;color:#000;transform:scaleX(0.9229);">TODO</div>
<svg class="s" style="left:1644px;top:981.5px;" width="16" height="16" viewBox="0 0 16 16"><circle cx="8" cy="8" r="7.9" fill="#59a869"/><path d="M6 5.5 L8.8 3.8 V12.5" stroke="#fff" stroke-width="1.6" fill="none"/></svg>
<div class="t" style="left:1665.20px;top:990.00px;font-size:14px;color:#000;transform:scaleX(0.9540);">Event Log</div>
<svg class="s" style="left:1754.5px;top:981px;" width="17" height="16" viewBox="0 0 17 16"><path d="M0.5 11 V0.5 H11" stroke="#6e6e6e" stroke-width="1" fill="none"/><path d="M2.5 13 V2.5 H13" stroke="#6e6e6e" stroke-width="1" fill="none"/><rect x="4.5" y="4.5" width="9" height="9" fill="none" stroke="#6e6e6e" stroke-width="1"/><circle cx="10" cy="10" r="2.6" fill="#f2f2f2" stroke="#6e6e6e" stroke-width="1.3"/><path d="M12 12 L15.5 15.5" stroke="#6e6e6e" stroke-width="1.6"/></svg>
<div class="t" style="left:1776.00px;top:990.00px;font-size:14px;color:#000;transform:scaleX(0.9942);">Layout Inspector</div>
<svg class="s" style="left:7px;top:1008px;" width="16" height="16" viewBox="0 0 16 16"><rect x="3.5" y="0.5" width="12" height="12" fill="none" stroke="#6e6e6e" stroke-width="1"/><path d="M0.5 3.5 V15.5 H12.5" stroke="#9a9a9a" stroke-width="1" fill="none"/></svg>
<div class="t" style="left:34.10px;top:1016.00px;font-size:15px;color:#000;transform:scaleX(0.9758);">Gradle sync finished in 3 s 207 ms (a minute ago)</div>
<div class="t" style="left:1513.60px;top:1016.00px;font-size:15px;color:#000;transform:scaleX(0.9235);">50 chars</div>
<div class="t" style="left:1587.50px;top:1016.00px;font-size:15px;color:#000;transform:scaleX(0.9007);">2:54</div>
<div class="t" style="left:1629.50px;top:1016.00px;font-size:15px;color:#000;transform:scaleX(0.7985);">CRLF</div>
<div class="t" style="left:1676.80px;top:1016.00px;font-size:15px;color:#a0a0a0;transform:scaleX(0.8941);">UTF-8</div>
<div class="t" style="left:1729.70px;top:1016.00px;font-size:15px;color:#000;transform:scaleX(0.9300);">4 spaces</div>
<svg class="s" style="left:1800px;top:1008.5px;" width="14" height="13" viewBox="0 0 14 13"><path d="M1.5 6 V3.5 A2.8 2.8 0 0 1 7 3.5" stroke="#6e6e6e" stroke-width="1.6" fill="none"/><rect x="5" y="6" width="8.5" height="7" fill="#6e6e6e"/></svg>
<svg class="s" style="left:1829.9px;top:1007px;" width="19" height="19" viewBox="0 0 19 19"><circle cx="9.5" cy="9.5" r="8.8" fill="#ffcc4d" stroke="#c99a1a" stroke-width="0.8"/><ellipse cx="6.5" cy="7" rx="1.1" ry="1.5" fill="#664500"/><ellipse cx="12.5" cy="7" rx="1.1" ry="1.5" fill="#664500"/><path d="M5 11 Q9.5 15.5 14 11" stroke="#664500" stroke-width="1.3" fill="none"/></svg>
<svg class="s" style="left:1859.8px;top:1007px;" width="19" height="19" viewBox="0 0 19 19"><circle cx="9.5" cy="9.5" r="8.8" fill="#ffcc4d" stroke="#c99a1a" stroke-width="0.8"/><ellipse cx="6.5" cy="7" rx="1.1" ry="1.5" fill="#664500"/><ellipse cx="12.5" cy="7" rx="1.1" ry="1.5" fill="#664500"/><path d="M5.5 14 Q9.5 10.5 13.5 14" stroke="#664500" stroke-width="1.3" fill="none"/></svg>
<svg class="s" style="left:1891px;top:1007.5px;" width="16" height="17" viewBox="0 0 16 17"><path d="M4 5 V1.5 Q8 0 12 1.5 V5 Z M1 5.5 H15" stroke="#6e6e6e" stroke-width="1.4" fill="#6e6e6e"/><path d="M3.5 6 H12.5 V10 Q8 13.5 3.5 10 Z" fill="#d9d9d9" stroke="#6e6e6e" stroke-width="1"/><path d="M1 17 Q2 12 5.5 12 L8 14 L10.5 12 Q14 12 15 17 Z" fill="#6e6e6e"/></svg>
<svg class="s" style="left:20px;top:1045px;" width="20" height="20" viewBox="0 0 20 20"><path d="M0 2.8 L8.2 1.6 V9.4 H0 Z M9.3 1.45 L20 0 V9.4 H9.3 Z M0 10.6 H8.2 V18.4 L0 17.2 Z M9.3 10.6 H20 V20 L9.3 18.55 Z" fill="#fff"/></svg>
<div class="r" style="left:60px;top:1030px;width:430px;height:49px;background:#f0f0f0;"></div>
<div class="r" style="left:60px;top:1079px;width:430px;height:1px;background:#9a9a9a;"></div>
<svg class="s" style="left:75px;top:1045px;" width="20" height="20" viewBox="0 0 20 20"><circle cx="13" cy="7" r="5.8" fill="none" stroke="#111" stroke-width="1.5"/><path d="M8.8 11.2 L1 19" stroke="#111" stroke-width="1.5"/></svg>
<div class="t" style="left:110.50px;top:1056.00px;font-size:18px;color:#222;transform:scaleX(1.0245);">Type here to search</div>
<svg class="s" style="left:510px;top:1045px;" width="20" height="20" viewBox="0 0 20 20"><circle cx="10" cy="10" r="8.6" fill="none" stroke="#fff" stroke-width="2"/></svg>
<svg class="s" style="left:569px;top:1044px;" width="22" height="22" viewBox="0 0 22 22"><rect x="1.5" y="6" width="13" height="10" fill="none" stroke="#fff" stroke-width="1.3"/><path d="M1.5 2 V4 H14.5 V2 M1.5 20 V18 H14.5 V20" stroke="#fff" stroke-width="1.3" fill="none"/><path d="M19 1.5 V20.5" stroke="#fff" stroke-width="1.3"/><rect x="17.5" y="7" width="3" height="5" fill="#fff"/></svg>
<svg class="s" style="left:629.5px;top:1040.5px;" width="28" height="27" viewBox="0 0 28 27"><rect x="1" y="1" width="26" height="25" rx="3" fill="#001e36" stroke="#31a8ff" stroke-width="2"/><text x="5" y="19" font-family="Liberation Sans" font-weight="700" font-size="14" fill="#31a8ff">Ps</text></svg>
<svg class="s" style="left:691px;top:1040px;" width="30" height="29" viewBox="0 0 30 29"><path d="M0 10 L15 0 L30 10 V29 H0 Z" fill="#0f78d4"/><path d="M4 10 H26 L15 17 Z" fill="#eaeaea"/><path d="M0 10 L15 19 L30 10 V29 H0 Z" fill="#28a8ea"/><path d="M0 29 L15 19 L30 29 Z" fill="#50d9ff" opacity=".55"/></svg>
<svg class="s" style="left:752px;top:1039px;" width="30" height="31" viewBox="0 0 30 31"><path d="M10 8 V5 A5 4.5 0 0 1 20 5 V8" stroke="#ddd" stroke-width="1.8" fill="none"/><path d="M0 7 H30 V30 H0 Z" fill="#fff"/><rect x="8" y="12" width="6.5" height="6.5" fill="#f25022"/><rect x="15.5" y="12" width="6.5" height="6.5" fill="#7fba00"/><rect x="8" y="19.5" width="6.5" height="6.5" fill="#00a4ef"/><rect x="15.5" y="19.5" width="6.5" height="6.5" fill="#ffb900"/></svg>
<svg class="s" style="left:814.5px;top:1040px;" width="31" height="31" viewBox="0 0 31 31"><defs><linearGradient id="eg" x1="0" y1="0" x2="1" y2="1"><stop offset="0" stop-color="#35c1f1"/><stop offset=".6" stop-color="#1392e2"/><stop offset="1" stop-color="#2fb34f"/></linearGradient></defs><circle cx="15.5" cy="15.5" r="15" fill="url(#eg)"/><path d="M7 20 C7 12 14 10 19 12.5 C23 14.5 24 19 20 21 C16 23 13 21 15 18 C9 18 9 24 13 28 C6 27 2 22 3 16 Z" fill="#0c59a4"/><circle cx="16" cy="16.5" r="3" fill="#203640"/></svg>
<svg class="s" style="left:877px;top:1041px;" width="29" height="29" viewBox="0 0 29 29"><circle cx="14.5" cy="14.5" r="14" fill="#db4437"/><path d="M14.5 14.5 L2.4 7.5 A14 14 0 0 0 7.5 26.6 Z" fill="#0f9d58"/><path d="M14.5 14.5 L7.5 26.6 A14 14 0 0 0 28.5 14.5 L26.6 7.5 Z" fill="#ffcd40"/><path d="M14.5 14.5 H28.5 A14 14 0 0 0 26.6 7.5 Z" fill="#db4437"/><circle cx="14.5" cy="14.5" r="6.2" fill="#fff"/><circle cx="14.5" cy="14.5" r="4.8" fill="#4285f4"/></svg>
<svg class="s" style="left:939px;top:1041px;" width="30" height="28" viewBox="0 0 30 28"><rect x="1" y="1" width="28" height="19" rx="2" fill="#fff" stroke="#4650d8" stroke-width="2.2"/><circle cx="15" cy="10.5" r="4.5" fill="#26297a"/><path d="M6 22 H24 Q22 27 15 27 Q8 27 6 22 Z" fill="#26297a"/></svg>
<svg class="s" style="left:1001.5px;top:1042px;" width="29" height="25" viewBox="0 0 29 25"><path d="M0 2 Q0 0 2 0 H9 L11 2 H27 Q28 2 28 4 V23 H0 Z" fill="#e8a80c"/><rect x="0" y="5" width="28" height="19" fill="#ffd14f"/><path d="M6 24 V14 H22 V24 H18 V18 H10 V24 Z" fill="#2b8be0"/></svg>
<div class="r" style="left:1048px;top:1030px;width:61px;height:50px;background:#4a5963;"></div>
<svg class="s" style="left:1063px;top:1041px;" width="29" height="29" viewBox="0 0 29 29"><circle cx="14.5" cy="14" r="12.5" fill="#3ddc84"/><path d="M6 27 L14.5 9 L23 27" stroke="#e8e8e8" stroke-width="2" fill="none"/><path d="M9 19 Q14.5 22 20 19" stroke="#e8e8e8" stroke-width="1.6" fill="none"/><circle cx="14.5" cy="10" r="3.3" fill="#073042"/><rect x="13.5" y="3" width="2" height="4" fill="#073042"/></svg>
<div class="r" style="left:867px;top:1077px;width:51px;height:3px;background:#76b9ed;"></div>
<div class="r" style="left:929px;top:1077px;width:51px;height:3px;background:#76b9ed;"></div>
<div class="r" style="left:991px;top:1077px;width:51px;height:3px;background:#76b9ed;"></div>
<div class="r" style="left:1048px;top:1077px;width:61px;height:3px;background:#76b9ed;"></div>
<svg class="s" style="left:1656px;top:1050px;" width="18" height="10" viewBox="0 0 18 10"><path d="M1 9 L8.5 1.5 L16 9" stroke="#fff" stroke-width="1.2" fill="none"/></svg>
<svg class="s" style="left:1684px;top:1047px;" width="22" height="15" viewBox="0 0 22 15"><path d="M3 0 V3 M6 0 V3 M1.5 3 H7.5 V6 Q4.5 9 1.5 6 Z M4.5 8 V14" stroke="#fff" stroke-width="1" fill="none"/><rect x="6.5" y="4.5" width="13" height="8" fill="#fff" stroke="#fff" stroke-width="1"/><rect x="20" y="6.5" width="1.5" height="4" fill="#fff"/></svg>
<svg class="s" style="left:1716px;top:1046px;" width="18" height="17" viewBox="0 0 18 17"><path d="M1 15.5 A14 14 0 0 1 15 1.5 M4 15.5 A11 11 0 0 1 15 4.5 M7 15.5 A8 8 0 0 1 15 7.5" stroke="#fff" stroke-width="1" fill="none"/><circle cx="14" cy="15" r="1.5" fill="#fff"/></svg>
<svg class="s" style="left:1744px;top:1045px;" width="22" height="19" viewBox="0 0 22 19"><path d="M1 6 H5 L10 1.5 V17.5 L5 13 H1 Z" fill="none" stroke="#fff" stroke-width="1.1"/><path d="M13 7 A3 3 0 0 1 13 12 M15.5 4.5 A6.5 6.5 0 0 1 15.5 14.5 M18 2 A10 10 0 0 1 18 17" stroke="#fff" stroke-width="1.1" fill="none"/></svg>
<div class="t" style="left:1785.60px;top:1044.50px;font-size:15px;color:#fff;transform:scaleX(0.9195);">4:17 PM</div>
<div class="t" style="left:1782.50px;top:1067.00px;font-size:15px;color:#fff;transform:scaleX(1.0188);">9/1/2020</div>
<svg class="s" style="left:1867px;top:1044px;" width="30" height="30" viewBox="0 0 30 30"><path d="M1 1 H21.5 V16 H8 L4 20 V16 H1 Z" fill="#fff"/><path d="M4.5 5 H18 M4.5 8.5 H18 M4.5 12 H18" stroke="#1b2947" stroke-width="1.1"/><circle cx="21" cy="20.5" r="9.2" fill="#2b2b2b" stroke="#555" stroke-width="1"/><text x="16.6" y="26" font-family="Liberation Sans" font-size="15" fill="#fff">3</text></svg>
<div class="r" style="left:1914px;top:1035px;width:1px;height:45px;background:#3a4a66;"></div>
</body></html>
